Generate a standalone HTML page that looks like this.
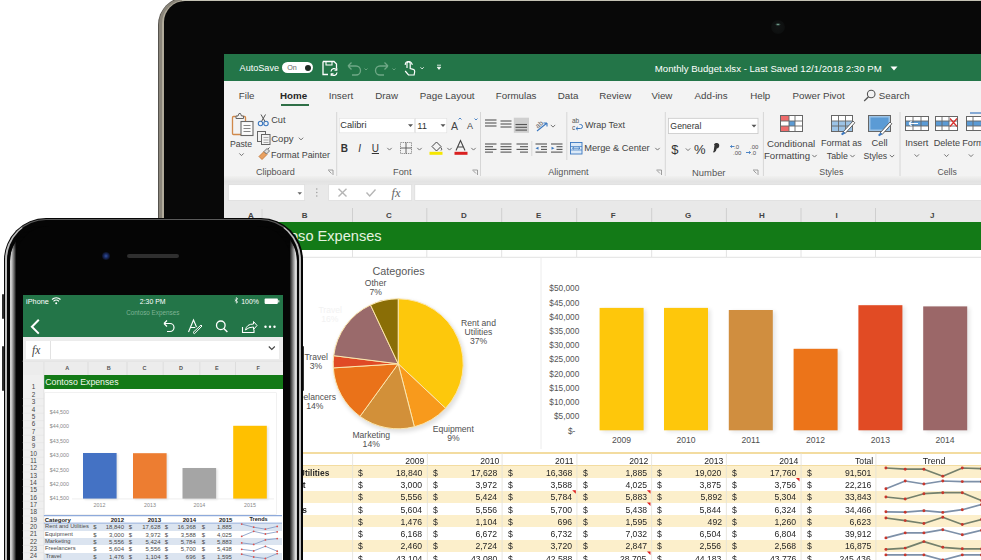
<!DOCTYPE html>
<html><head><meta charset="utf-8"><style>
html,body{margin:0;padding:0;background:#fff;}
#root{position:relative;width:981px;height:560px;overflow:hidden;background:#fff;font-family:"Liberation Sans",sans-serif;}
</style></head><body><div id="root">
<div style="position:absolute;left:157.50px;top:-3.00px;width:1000.00px;height:800.00px;background:#55524c;border-radius:28px;"></div>
<div style="position:absolute;left:159.20px;top:-2.20px;width:1000.00px;height:800.00px;background:#8a857a;border-radius:26px;"></div>
<div style="position:absolute;left:162.00px;top:-0.50px;width:1000.00px;height:800.00px;background:#b0aa9a;border-radius:23.5px;"></div>
<div style="position:absolute;left:182.00px;top:0.00px;width:800.00px;height:1.20px;background:#c4c2b4;"></div>
<div style="position:absolute;left:164.30px;top:1.30px;width:1000.00px;height:800.00px;background:#080808;border-radius:21px;"></div>
<div style="position:absolute;left:770.5px;top:19.8px;width:14px;height:14px;border-radius:50%;background:radial-gradient(ellipse 3px 1.6px at 50% 32%,#8ab8a8 0,rgba(60,90,80,0.6) 60%,rgba(0,0,0,0) 100%),radial-gradient(circle at 50% 50%,#121414 0,#0e1010 60%,#090909 100%);"></div>
<div style="position:absolute;left:224.00px;top:53.50px;width:800.00px;height:560.00px;background:#ffffff;"></div>
<div style="position:absolute;left:224.00px;top:53.50px;width:800.00px;height:27.80px;background:#237548;"></div>
<div style="position:absolute;left:224.00px;top:81.30px;width:800.00px;height:97.70px;background:#f3f3f3;"></div>
<div style="position:absolute;left:224.00px;top:175.50px;width:800.00px;height:9.20px;background:linear-gradient(180deg,#f1f1f0 0,#e3e3e3 60%,#e6e6e6 100%);"></div>
<div style="position:absolute;left:224.00px;top:184.70px;width:800.00px;height:37.50px;background:#e9e9e9;"></div>
<div style="position:absolute;left:224.00px;top:222.20px;width:800.00px;height:27.80px;background:#137a17;"></div>
<div style="position:absolute;left:282.00px;top:62.20px;width:31.00px;height:11.00px;background:#ffffff;border-radius:6px;"></div>
<div style="position:absolute;left:304.5px;top:64.8px;width:6.5px;height:6.5px;border-radius:50%;background:#1f2a24;"></div>
<svg style="position:absolute;left:321px;top:60px" width="18" height="16" viewBox="0 0 18 16">
<path d="M2 1.5h11l2.5 2.5v4M2 1.5v13h5" fill="none" stroke="#fff" stroke-width="1.3"/>
<path d="M5 1.5v3.5h6v-3.5" fill="none" stroke="#fff" stroke-width="1.1"/>
<path d="M10 11.5a3.2 3.2 0 0 1 5.8-1.6M16 12.5a3.2 3.2 0 0 1-5.8 1.6" fill="none" stroke="#fff" stroke-width="1.2"/>
<path d="M15.8 8v2.3h-2.3M10.2 16.2v-2.3h2.3" fill="none" stroke="#fff" stroke-width="1.1"/>
</svg>
<svg style="position:absolute;left:345px;top:60px" width="60" height="16" viewBox="0 0 60 16">
<path d="M3 6h8a4.5 4.5 0 0 1 0 9H7M3 6l3.5-3.5M3 6l3.5 3.5" fill="none" stroke="#6fa886" stroke-width="1.3"/>
<path d="M19.5 8.5l1.5 1.5 1.5-1.5" fill="none" stroke="#6fa886" stroke-width="0.9"/>
<path d="M43 6h-8a4.5 4.5 0 0 0 0 9h4M43 6l-3.5-3.5M43 6l-3.5 3.5" fill="none" stroke="#6fa886" stroke-width="1.3"/>
<path d="M47.5 8.5l1.5 1.5 1.5-1.5" fill="none" stroke="#6fa886" stroke-width="0.9"/>
</svg>
<svg style="position:absolute;left:402px;top:59px" width="45" height="18" viewBox="0 0 45 18">
<path d="M5 9V4.5a1.6 1.6 0 0 1 3.2 0V9.5l3 .8a2 2 0 0 1 1.5 2.2l-.6 3.5H6.5L3.2 12" fill="none" stroke="#fff" stroke-width="1.2"/>
<path d="M3.2 6a3.5 3.5 0 0 1 7 0" fill="none" stroke="#fff" stroke-width="1.1"/>
<path d="M18.5 8.3l1.6 1.6 1.6-1.6" fill="none" stroke="#fff" stroke-width="0.9"/>
<path d="M35 6.2h4M35.3 8.2h3.4l-1.7 2.2z" fill="#fff" stroke="#fff" stroke-width="0.8"/>
</svg>
<svg style="position:absolute;left:889.5px;top:65.5px" width="8" height="5" viewBox="0 0 8 5"><path d="M0.5 0.5h7l-3.5 4z" fill="#fff"/></svg>
<div style="position:absolute;left:281.00px;top:104.00px;width:28.00px;height:2.20px;background:#2f6f47;"></div>
<svg style="position:absolute;left:863px;top:89px" width="14" height="13" viewBox="0 0 14 13">
<circle cx="8.2" cy="5" r="3.8" fill="none" stroke="#555" stroke-width="1.1"/><path d="M5.5 7.8L1.2 12" stroke="#555" stroke-width="1.3"/></svg>
<div style="position:absolute;left:224.00px;top:449.50px;width:800.00px;height:4.00px;background:#ffffff;"></div><div style="position:absolute;left:224.00px;top:466.10px;width:800.00px;height:12.25px;background:#fcefcb;"></div><div style="position:absolute;left:224.00px;top:490.60px;width:800.00px;height:12.25px;background:#fcefcb;"></div><div style="position:absolute;left:224.00px;top:515.10px;width:800.00px;height:12.25px;background:#fcefcb;"></div><div style="position:absolute;left:224.00px;top:539.60px;width:800.00px;height:12.25px;background:#fcefcb;"></div><div style="position:absolute;left:224.00px;top:452.20px;width:800.00px;height:1.60px;background:#f3dca0;"></div><div style="position:absolute;left:224.00px;top:465.00px;width:800.00px;height:1.30px;background:#f3dca0;"></div>
<svg style="position:absolute;left:0;top:0" width="981" height="560" viewBox="0 0 981 560"><defs><filter id="blur2" x="-20%" y="-20%" width="140%" height="140%"><feGaussianBlur stdDeviation="2"/></filter></defs><rect x="232.5" y="116.5" width="13" height="18" rx="1" fill="none" stroke="#d0884a" stroke-width="1.3"/><path d="M236 118.5v-2.5h2l1-2.5h1.5l1 2.5h2v2.5z" fill="#f3f3f3" stroke="#666" stroke-width="1"/><rect x="241" y="121.5" width="12" height="14" fill="#fafafa" stroke="#666" stroke-width="1.1"/><path d="M243.5 125.5h7M243.5 128.5h7M243.5 131.5h7" stroke="#777" stroke-width="0.9"/><path d="M239.3 153.4l2.2 2.2l2.2 -2.2" fill="none" stroke="#666" stroke-width="0.9"/><circle cx="260.5" cy="123.5" r="2.2" fill="none" stroke="#3b78c0" stroke-width="1.1"/><circle cx="266" cy="123.5" r="2.2" fill="none" stroke="#3b78c0" stroke-width="1.1"/><path d="M261.5 121.5L265.5 114.5M265 121.5L261 114.5" stroke="#555" stroke-width="1"/><rect x="257.5" y="131.5" width="8" height="10" fill="#f3f3f3" stroke="#666" stroke-width="1"/><rect x="261.5" y="134.5" width="8.5" height="10" fill="#f3f3f3" stroke="#666" stroke-width="1"/><path d="M263.5 137.5h5M263.5 140h5M263.5 142.5h5" stroke="#888" stroke-width="0.7"/><path d="M298.8 137.7l2.2 2.2l2.2 -2.2" fill="none" stroke="#666" stroke-width="0.9"/><path d="M259 156.5l5-5 3 3-5 5z" fill="#e8a060" stroke="#c4783a" stroke-width="0.9"/><path d="M264 151.5l3-3 2.5 2.5-3 3z" fill="#ddd" stroke="#666" stroke-width="0.9"/><path d="M268 149l1.5-1.5" stroke="#666" stroke-width="1"/><path d="M328.0 170.0h5v5" fill="none" stroke="#888" stroke-width="0.8"/><path d="M328.5 170.5l3 3" stroke="#888" stroke-width="0.8"/><path d="M336.7 112.0V176.0" stroke="#d6d6d6" stroke-width="1"/><rect x="339.3" y="118.3" width="75" height="14.5" fill="#fff" stroke="#e0e0e0" stroke-width="0.6"/><rect x="415.5" y="118.3" width="31.3" height="14.5" fill="#fff" stroke="#e0e0e0" stroke-width="0.6"/><path d="M408 124.3h5l-2.5 2.7z M440.5 124.3h5l-2.5 2.7z" fill="#555"/><path d="M458.5 119.5l1.5-1.5 1.5 1.5" fill="none" stroke="#3b78c0" stroke-width="0.9"/><path d="M474.5 118.5l1.5 1.5 1.5-1.5" fill="none" stroke="#3b78c0" stroke-width="0.9"/><path d="M387.3 147.9l2.2 2.2l2.2 -2.2" fill="none" stroke="#666" stroke-width="0.9"/><rect x="400.5" y="142.5" width="11" height="11" fill="none" stroke="#777" stroke-width="0.9" stroke-dasharray="1.2 1"/><path d="M406 142.5v11M400.5 148h11" stroke="#555" stroke-width="0.9"/><path d="M417.3 147.9l2.2 2.2l2.2 -2.2" fill="none" stroke="#666" stroke-width="0.9"/><path d="M432 146.5l4.5-4.5 4.5 4.5-4.5 4.5z" fill="none" stroke="#444" stroke-width="1"/><path d="M441 147.5q1.5 2 0 3" fill="none" stroke="#444" stroke-width="0.9"/><rect x="429.5" y="151.8" width="13" height="3" fill="#f5e600"/><path d="M447.3 147.9l2.2 2.2l2.2 -2.2" fill="none" stroke="#666" stroke-width="0.9"/><path d="M456 150.5l4.5-10 4.5 10M457.7 147h5.6" fill="none" stroke="#444" stroke-width="1.1"/><rect x="454.5" y="151.8" width="13" height="3" fill="#d92020"/><path d="M471.3 147.9l2.2 2.2l2.2 -2.2" fill="none" stroke="#666" stroke-width="0.9"/><path d="M472.5 170.0h5v5" fill="none" stroke="#888" stroke-width="0.8"/><path d="M473.0 170.5l3 3" stroke="#888" stroke-width="0.8"/><path d="M480.5 112.0V176.0" stroke="#d6d6d6" stroke-width="1"/><path d="M485.0 120.0h11.5" stroke="#555" stroke-width="1.1"/><path d="M485.0 123.0h11.5" stroke="#555" stroke-width="1.1"/><path d="M485.0 126.0h11.5" stroke="#555" stroke-width="1.1"/><path d="M500.5 121.0h11.0" stroke="#555" stroke-width="1.1"/><path d="M500.5 124.0h11.0" stroke="#555" stroke-width="1.1"/><path d="M500.5 127.0h11.0" stroke="#555" stroke-width="1.1"/><rect x="513.8" y="117.7" width="15.2" height="15.1" fill="#cfcfcf"/><path d="M515.5 124.5h11.5" stroke="#555" stroke-width="1.1"/><path d="M515.5 127.3h11.5" stroke="#555" stroke-width="1.1"/><path d="M515.5 130.1h11.5" stroke="#555" stroke-width="1.1"/><text x="535" y="127" font-size="7" font-family="Liberation Sans" fill="#555" transform="rotate(-40 539 124)">ab</text><path d="M537 131l10-8M547 123h-3.5M547 123v3.5" fill="none" stroke="#3b78c0" stroke-width="1.1"/><path d="M550.8 124.9l2.2 2.2l2.2 -2.2" fill="none" stroke="#666" stroke-width="0.9"/><path d="M566.8 112.0V160.0" stroke="#d6d6d6" stroke-width="1"/><text x="572" y="123" font-size="6.5" font-family="Liberation Sans" fill="#555">ab</text><text x="572" y="130" font-size="6.5" font-family="Liberation Sans" fill="#555">c</text><path d="M576 128.5h4.5a2 2 0 0 0 0-4h-1M576 128.5l1.8-1.6M576 128.5l1.8 1.6" fill="none" stroke="#3b78c0" stroke-width="1"/><path d="M485.0 144.0h11.5" stroke="#555" stroke-width="1.1"/><path d="M485.0 146.7h8.0" stroke="#555" stroke-width="1.1"/><path d="M485.0 149.4h11.5" stroke="#555" stroke-width="1.1"/><path d="M485.0 152.1h8.0" stroke="#555" stroke-width="1.1"/><path d="M500.5 144.0h11.0" stroke="#555" stroke-width="1.1"/><path d="M500.5 146.7h11.0" stroke="#555" stroke-width="1.1"/><path d="M500.5 149.4h11.0" stroke="#555" stroke-width="1.1"/><path d="M500.5 152.1h11.0" stroke="#555" stroke-width="1.1"/><path d="M516.5 144.0h11.5" stroke="#555" stroke-width="1.1"/><path d="M520.0 146.7h8.0" stroke="#555" stroke-width="1.1"/><path d="M516.5 149.4h11.5" stroke="#555" stroke-width="1.1"/><path d="M520.0 152.1h8.0" stroke="#555" stroke-width="1.1"/><path d="M531.8 141.0V156.0" stroke="#d6d6d6" stroke-width="1"/><path d="M535.5 144.0h11.5" stroke="#555" stroke-width="1.1"/><path d="M541.0 146.7h6.0" stroke="#555" stroke-width="1.1"/><path d="M541.0 149.4h6.0" stroke="#555" stroke-width="1.1"/><path d="M535.5 152.1h11.5" stroke="#555" stroke-width="1.1"/><path d="M535.5 148.2l3-1.5v3z" fill="#3b78c0"/><path d="M551.0 144.0h11.5" stroke="#555" stroke-width="1.1"/><path d="M556.5 146.7h6.0" stroke="#555" stroke-width="1.1"/><path d="M556.5 149.4h6.0" stroke="#555" stroke-width="1.1"/><path d="M551.0 152.1h11.5" stroke="#555" stroke-width="1.1"/><path d="M554.5 148.2l-3-1.5v3z" fill="#3b78c0"/><rect x="570.5" y="142.5" width="11.5" height="11.5" fill="#dceaf8" stroke="#3b78c0" stroke-width="0.9"/><path d="M570.5 146.5h11.5M570.5 150h11.5" stroke="#3b78c0" stroke-width="0.7"/><path d="M572.5 148.2h7.5M572.5 148.2l1.5-1.2M572.5 148.2l1.5 1.2M580 148.2l-1.5-1.2M580 148.2l-1.5 1.2" stroke="#3b78c0" stroke-width="0.8" fill="none"/><path d="M655.3 147.9l2.2 2.2l2.2 -2.2" fill="none" stroke="#666" stroke-width="0.9"/><path d="M656.5 170.0h5v5" fill="none" stroke="#888" stroke-width="0.8"/><path d="M657.0 170.5l3 3" stroke="#888" stroke-width="0.8"/><path d="M665.3 112.0V176.0" stroke="#d6d6d6" stroke-width="1"/><rect x="668.4" y="118.3" width="89.6" height="15.3" fill="#fff" stroke="#c8c8c8" stroke-width="0.8"/><path d="M751.5 124.8h5l-2.5 2.7z" fill="#555"/><path d="M685.8 148.4l2.2 2.2l2.2 -2.2" fill="none" stroke="#666" stroke-width="0.9"/><path d="M714.5 145a2.1 2.1 0 1 1 1.8 2.8q-.3 3-2.8 4.4" fill="#333" stroke="#333" stroke-width="1.3"/><text x="734" y="148.5" font-size="6" font-family="Liberation Sans" fill="#555">.0</text><text x="733" y="154.5" font-size="6" font-family="Liberation Sans" fill="#555">.00</text><path d="M730.5 146.5h4M730.5 146.5l1.5-1.2M730.5 146.5l1.5 1.2" stroke="#3b78c0" stroke-width="0.9" fill="none"/><text x="750" y="148.5" font-size="6" font-family="Liberation Sans" fill="#555">.00</text><text x="751" y="154.5" font-size="6" font-family="Liberation Sans" fill="#555">.0</text><path d="M746 152.5h4.5M750.5 152.5l-1.5-1.2M750.5 152.5l-1.5 1.2" stroke="#3b78c0" stroke-width="0.9" fill="none"/><path d="M753.0 170.0h5v5" fill="none" stroke="#888" stroke-width="0.8"/><path d="M753.5 170.5l3 3" stroke="#888" stroke-width="0.8"/><path d="M763.4 112.0V176.0" stroke="#d6d6d6" stroke-width="1"/><rect x="780.5" y="115.5" width="22" height="16" fill="#fff" stroke="#666" stroke-width="1"/><rect x="781" y="116" width="8" height="5" fill="#ee6b6b"/><rect x="781" y="126" width="8" height="5" fill="#ee6b6b"/><rect x="789" y="121" width="6" height="5" fill="#5b9bd5"/><path d="M780.5 121h22M780.5 126h22M789 115.5v16M795 115.5v16" stroke="#666" stroke-width="0.9"/><rect x="831.5" y="115.5" width="21" height="16" fill="#fff" stroke="#666" stroke-width="1"/><rect x="832" y="121" width="20" height="10" fill="#9cc3e6"/><path d="M831.5 121h21M831.5 126h21M838.5 115.5v16M845.5 115.5v16" stroke="#666" stroke-width="0.9"/><path d="M843 132l10-11 1.8 1.8-9.5 10.5z" fill="#fff" stroke="#555" stroke-width="0.9"/><path d="M841 134l2.5-2.5 1.8 1.8-3 2z" fill="#3b78c0"/><rect x="868.5" y="115.5" width="22" height="16" fill="#9cc3e6" stroke="#666" stroke-width="1"/><rect x="870.5" y="117.5" width="18" height="12" fill="#5b9bd5"/><path d="M880 133l10-11 1.8 1.8-9.5 10.5z" fill="#fff" stroke="#555" stroke-width="0.9"/><path d="M878 135l2.5-2.5 1.8 1.8-3 2z" fill="#3b78c0"/><path d="M812.3 154.9l2.2 2.2l2.2 -2.2" fill="none" stroke="#666" stroke-width="0.9"/><path d="M850.3 154.9l2.2 2.2l2.2 -2.2" fill="none" stroke="#666" stroke-width="0.9"/><path d="M889.8 154.9l2.2 2.2l2.2 -2.2" fill="none" stroke="#666" stroke-width="0.9"/><path d="M900.0 112.0V176.0" stroke="#d6d6d6" stroke-width="1"/><rect x="905.5" y="116.5" width="23" height="14" fill="#fff" stroke="#666" stroke-width="1"/><rect x="906" y="121" width="22" height="5" fill="#5b9bd5"/><path d="M905.5 121h23M905.5 126h23M913 116.5v14M921 116.5v14" stroke="#666" stroke-width="0.9"/><path d="M909 123.5h9M909 123.5l2.5-2.3M909 123.5l2.5 2.3" stroke="#fff" stroke-width="1.1" fill="none"/><rect x="935.5" y="116.5" width="22" height="14" fill="#fff" stroke="#666" stroke-width="1"/><rect x="936" y="121" width="13" height="5" fill="#5b9bd5"/><path d="M935.5 121h22M935.5 126h22M942 116.5v14M949 116.5v14" stroke="#666" stroke-width="0.9"/><path d="M950 118.5l7 8M957 118.5l-7 8" stroke="#d9302c" stroke-width="1.2"/><rect x="966.5" y="116.5" width="20" height="14" fill="#fff" stroke="#666" stroke-width="1"/><rect x="967" y="121" width="18" height="5" fill="#5b9bd5"/><path d="M966.5 121h20M966.5 126h20M973 116.5v14" stroke="#666" stroke-width="0.9"/><path d="M970 113h14" stroke="#3b78c0" stroke-width="1.2"/><path d="M914.6 154.4l2.2 2.2l2.2 -2.2" fill="none" stroke="#666" stroke-width="0.9"/><path d="M944.3 154.4l2.2 2.2l2.2 -2.2" fill="none" stroke="#666" stroke-width="0.9"/><path d="M968.8 154.4l2.2 2.2l2.2 -2.2" fill="none" stroke="#666" stroke-width="0.9"/><rect x="228.3" y="184.7" width="76.4" height="15.8" fill="#fff" stroke="#dadada" stroke-width="0.7"/><path d="M297.5 192.3h4.5l-2.25 2.4z" fill="#666"/><circle cx="316.8" cy="189" r="0.7" fill="#999"/><circle cx="316.8" cy="192.5" r="0.7" fill="#999"/><circle cx="316.8" cy="196" r="0.7" fill="#999"/><rect x="328.7" y="184.7" width="83" height="15.8" fill="#fff" stroke="#dadada" stroke-width="0.7"/><path d="M338.5 188.8l8 7.6M346.5 188.8l-8 7.6" stroke="#b5b5b5" stroke-width="1.4"/><path d="M366.5 192.5l3.2 3.5 5.8-6.5" fill="none" stroke="#b5b5b5" stroke-width="1.4"/><text x="391.5" y="197" font-size="12.5" font-style="italic" font-family="Liberation Serif" fill="#666">fx</text><rect x="414.8" y="184.7" width="600" height="15.8" fill="#fff" stroke="#dadada" stroke-width="0.7"/><path d="M352.5 208V222" stroke="#cfcfcf" stroke-width="1"/><path d="M426.8 208V222" stroke="#cfcfcf" stroke-width="1"/><path d="M501.7 208V222" stroke="#cfcfcf" stroke-width="1"/><path d="M576.7 208V222" stroke="#cfcfcf" stroke-width="1"/><path d="M651.7 208V222" stroke="#cfcfcf" stroke-width="1"/><path d="M726.4 208V222" stroke="#cfcfcf" stroke-width="1"/><path d="M801.0 208V222" stroke="#cfcfcf" stroke-width="1"/><path d="M875.5 208V222" stroke="#cfcfcf" stroke-width="1"/><path d="M262 209V222" stroke="#d8d8d8" stroke-width="1"/><path d="M224 257.3H990" stroke="#e2e2e2" stroke-width="1"/><path d="M352.5 250V257" stroke="#e2e2e2" stroke-width="1"/><path d="M426.8 250V257" stroke="#e2e2e2" stroke-width="1"/><path d="M501.7 250V257" stroke="#e2e2e2" stroke-width="1"/><path d="M576.7 250V257" stroke="#e2e2e2" stroke-width="1"/><path d="M651.7 250V257" stroke="#e2e2e2" stroke-width="1"/><path d="M726.4 250V257" stroke="#e2e2e2" stroke-width="1"/><path d="M801.0 250V257" stroke="#e2e2e2" stroke-width="1"/><path d="M875.5 250V257" stroke="#e2e2e2" stroke-width="1"/><path d="M541 258V449" stroke="#ececec" stroke-width="1"/><circle cx="399.7" cy="366.3" r="66.0" fill="#000" opacity="0.12" filter="url(#blur2)"/><path d="M398.20 363.80L398.20 298.80A65.0 65.0 0 0 1 445.58 408.30Z" fill="#fdc80c" stroke="#fde7ad" stroke-width="1" stroke-linejoin="round"/><path d="M398.20 363.80L445.58 408.30A65.0 65.0 0 0 1 414.36 426.76Z" fill="#f89a1c" stroke="#fde7ad" stroke-width="1" stroke-linejoin="round"/><path d="M398.20 363.80L414.36 426.76A65.0 65.0 0 0 1 359.99 416.39Z" fill="#d29039" stroke="#fde7ad" stroke-width="1" stroke-linejoin="round"/><path d="M398.20 363.80L359.99 416.39A65.0 65.0 0 0 1 333.33 367.88Z" fill="#ea7219" stroke="#fde7ad" stroke-width="1" stroke-linejoin="round"/><path d="M398.20 363.80L333.33 367.88A65.0 65.0 0 0 1 333.71 355.65Z" fill="#e04a25" stroke="#fde7ad" stroke-width="1" stroke-linejoin="round"/><path d="M398.20 363.80L333.71 355.65A65.0 65.0 0 0 1 370.52 304.99Z" fill="#9a6a6b" stroke="#fde7ad" stroke-width="1" stroke-linejoin="round"/><path d="M398.20 363.80L370.52 304.99A65.0 65.0 0 0 1 398.20 298.80Z" fill="#8a6e06" stroke="#fde7ad" stroke-width="1" stroke-linejoin="round"/><rect x="602.1" y="309.4" width="44" height="122.4" fill="#000" opacity="0.10" filter="url(#blur2)"/><rect x="599.6" y="307.9" width="44" height="122.4" fill="#fec70b"/><rect x="666.5" y="309.4" width="44" height="122.4" fill="#000" opacity="0.10" filter="url(#blur2)"/><rect x="664.0" y="307.9" width="44" height="122.4" fill="#fec70b"/><rect x="731.3" y="311.5" width="44" height="120.3" fill="#000" opacity="0.10" filter="url(#blur2)"/><rect x="728.8" y="310.0" width="44" height="120.3" fill="#d08e3f"/><rect x="796.1" y="350.3" width="44" height="81.5" fill="#000" opacity="0.10" filter="url(#blur2)"/><rect x="793.6" y="348.8" width="44" height="81.5" fill="#ec7419"/><rect x="860.9" y="306.7" width="44" height="125.1" fill="#000" opacity="0.10" filter="url(#blur2)"/><rect x="858.4" y="305.2" width="44" height="125.1" fill="#e14b24"/><rect x="925.7" y="307.9" width="44" height="123.9" fill="#000" opacity="0.10" filter="url(#blur2)"/><rect x="923.2" y="306.4" width="44" height="123.9" fill="#9b6768"/><path d="M352.6 453V560" stroke="#e4e1d8" stroke-width="0.8"/><path d="M427.4 453V560" stroke="#e4e1d8" stroke-width="0.8"/><path d="M502.1 453V560" stroke="#e4e1d8" stroke-width="0.8"/><path d="M576.9 453V560" stroke="#e4e1d8" stroke-width="0.8"/><path d="M651.6 453V560" stroke="#e4e1d8" stroke-width="0.8"/><path d="M726.4 453V560" stroke="#e4e1d8" stroke-width="0.8"/><path d="M801.1 453V560" stroke="#e4e1d8" stroke-width="0.8"/><path d="M875.9 453V560" stroke="#e4e1d8" stroke-width="0.8"/><path d="M572.2 490.2h3.6v3.6z" fill="#e02020"/><path d="M646.9 490.2h3.6v3.6z" fill="#e02020"/><path d="M646.9 502.5h3.6v3.6z" fill="#e02020"/><path d="M646.9 551.5h3.6v3.6z" fill="#e02020"/><path d="M795.9 478.0h3.6v3.6z" fill="#e02020"/><polyline points="885.9,468.0 905.2,469.2 923.9,469.2 942.8,476.2 962.3,468.0 981.5,468.7" fill="none" stroke="#74806c" stroke-width="1.7" stroke-linejoin="round"/><circle cx="885.9" cy="468.0" r="1.45" fill="#c8362c"/><circle cx="905.2" cy="469.2" r="1.45" fill="#c8362c"/><circle cx="923.9" cy="469.2" r="1.45" fill="#c8362c"/><circle cx="942.8" cy="476.2" r="1.45" fill="#c8362c"/><circle cx="962.3" cy="468.0" r="1.45" fill="#c8362c"/><circle cx="981.5" cy="468.7" r="1.45" fill="#c8362c"/><polyline points="885.9,488.8 905.2,481.0 923.9,484.0 942.8,481.0 962.3,481.6 981.5,481.6" fill="none" stroke="#7d90a8" stroke-width="1.7" stroke-linejoin="round"/><circle cx="885.9" cy="488.8" r="1.45" fill="#c8362c"/><circle cx="905.2" cy="481.0" r="1.45" fill="#c8362c"/><circle cx="923.9" cy="484.0" r="1.45" fill="#c8362c"/><circle cx="942.8" cy="481.0" r="1.45" fill="#c8362c"/><circle cx="962.3" cy="481.6" r="1.45" fill="#c8362c"/><circle cx="981.5" cy="481.6" r="1.45" fill="#c8362c"/><polyline points="885.9,497.0 905.2,499.0 923.9,493.7 942.8,492.7 962.3,492.7 981.5,500.5" fill="none" stroke="#74806c" stroke-width="1.7" stroke-linejoin="round"/><circle cx="885.9" cy="497.0" r="1.45" fill="#c8362c"/><circle cx="905.2" cy="499.0" r="1.45" fill="#c8362c"/><circle cx="923.9" cy="493.7" r="1.45" fill="#c8362c"/><circle cx="942.8" cy="492.7" r="1.45" fill="#c8362c"/><circle cx="962.3" cy="492.7" r="1.45" fill="#c8362c"/><circle cx="981.5" cy="500.5" r="1.45" fill="#c8362c"/><polyline points="885.9,511.8 905.2,512.2 923.9,510.7 942.8,512.4 962.3,509.7 981.5,504.6" fill="none" stroke="#7d90a8" stroke-width="1.7" stroke-linejoin="round"/><circle cx="885.9" cy="511.8" r="1.45" fill="#c8362c"/><circle cx="905.2" cy="512.2" r="1.45" fill="#c8362c"/><circle cx="923.9" cy="510.7" r="1.45" fill="#c8362c"/><circle cx="942.8" cy="512.4" r="1.45" fill="#c8362c"/><circle cx="962.3" cy="509.7" r="1.45" fill="#c8362c"/><circle cx="981.5" cy="504.6" r="1.45" fill="#c8362c"/><polyline points="885.9,518.0 905.2,520.6 923.9,523.5 942.8,517.3 962.3,524.5 981.5,519.4" fill="none" stroke="#74806c" stroke-width="1.7" stroke-linejoin="round"/><circle cx="885.9" cy="518.0" r="1.45" fill="#c8362c"/><circle cx="905.2" cy="520.6" r="1.45" fill="#c8362c"/><circle cx="923.9" cy="523.5" r="1.45" fill="#c8362c"/><circle cx="942.8" cy="517.3" r="1.45" fill="#c8362c"/><circle cx="962.3" cy="524.5" r="1.45" fill="#c8362c"/><circle cx="981.5" cy="519.4" r="1.45" fill="#c8362c"/><polyline points="885.9,537.9 905.2,532.9 923.9,532.9 942.8,529.7 962.3,534.8 981.5,530.3" fill="none" stroke="#7d90a8" stroke-width="1.7" stroke-linejoin="round"/><circle cx="885.9" cy="537.9" r="1.45" fill="#c8362c"/><circle cx="905.2" cy="532.9" r="1.45" fill="#c8362c"/><circle cx="923.9" cy="532.9" r="1.45" fill="#c8362c"/><circle cx="942.8" cy="529.7" r="1.45" fill="#c8362c"/><circle cx="962.3" cy="534.8" r="1.45" fill="#c8362c"/><circle cx="981.5" cy="530.3" r="1.45" fill="#c8362c"/><polyline points="885.9,549.4 905.2,548.1 923.9,541.6 942.8,547.3 962.3,548.8 981.5,548.8" fill="none" stroke="#74806c" stroke-width="1.7" stroke-linejoin="round"/><circle cx="885.9" cy="549.4" r="1.45" fill="#c8362c"/><circle cx="905.2" cy="548.1" r="1.45" fill="#c8362c"/><circle cx="923.9" cy="541.6" r="1.45" fill="#c8362c"/><circle cx="942.8" cy="547.3" r="1.45" fill="#c8362c"/><circle cx="962.3" cy="548.8" r="1.45" fill="#c8362c"/><circle cx="981.5" cy="548.8" r="1.45" fill="#c8362c"/><polyline points="885.9,554.9 905.2,554.9 923.9,554.9 942.8,560.0 962.3,554.9 981.5,554.9" fill="none" stroke="#7d90a8" stroke-width="1.7" stroke-linejoin="round"/><circle cx="885.9" cy="554.9" r="1.45" fill="#c8362c"/><circle cx="905.2" cy="554.9" r="1.45" fill="#c8362c"/><circle cx="923.9" cy="554.9" r="1.45" fill="#c8362c"/><circle cx="942.8" cy="560.0" r="1.45" fill="#c8362c"/><circle cx="962.3" cy="554.9" r="1.45" fill="#c8362c"/><circle cx="981.5" cy="554.9" r="1.45" fill="#c8362c"/></svg>
<div style="position:absolute;white-space:nowrap;line-height:9.10px;font-size:9.10px;color:#ffffff;font-weight:normal;font-family:'Liberation Sans', sans-serif;top:63.61px;left:239.60px;"><span style="">AutoSave</span></div>
<div style="position:absolute;white-space:nowrap;line-height:7.20px;font-size:7.20px;color:#666666;font-weight:normal;font-family:'Liberation Sans', sans-serif;top:64.49px;left:287.18px;"><span style="">On</span></div>
<div style="position:absolute;white-space:nowrap;line-height:9.63px;font-size:9.63px;color:#ffffff;font-weight:normal;font-family:'Liberation Sans', sans-serif;top:63.57px;left:654.83px;"><span style="">Monthly Budget.xlsx  -  Last Saved 12/1/2018 2:30 PM</span></div>
<div style="position:absolute;white-space:nowrap;line-height:9.75px;font-size:9.75px;color:#454545;font-weight:normal;font-family:'Liberation Sans', sans-serif;top:90.81px;left:238.82px;"><span style="">File</span></div>
<div style="position:absolute;white-space:nowrap;line-height:9.75px;font-size:9.75px;color:#454545;font-weight:normal;font-family:'Liberation Sans', sans-serif;top:90.81px;left:328.72px;"><span style="">Insert</span></div>
<div style="position:absolute;white-space:nowrap;line-height:9.75px;font-size:9.75px;color:#454545;font-weight:normal;font-family:'Liberation Sans', sans-serif;top:90.81px;left:375.22px;"><span style="">Draw</span></div>
<div style="position:absolute;white-space:nowrap;line-height:9.75px;font-size:9.75px;color:#454545;font-weight:normal;font-family:'Liberation Sans', sans-serif;top:90.81px;left:419.82px;"><span style="">Page Layout</span></div>
<div style="position:absolute;white-space:nowrap;line-height:9.75px;font-size:9.75px;color:#454545;font-weight:normal;font-family:'Liberation Sans', sans-serif;top:90.81px;left:495.82px;"><span style="">Formulas</span></div>
<div style="position:absolute;white-space:nowrap;line-height:9.75px;font-size:9.75px;color:#454545;font-weight:normal;font-family:'Liberation Sans', sans-serif;top:90.81px;left:557.82px;"><span style="">Data</span></div>
<div style="position:absolute;white-space:nowrap;line-height:9.75px;font-size:9.75px;color:#454545;font-weight:normal;font-family:'Liberation Sans', sans-serif;top:90.81px;left:599.22px;"><span style="">Review</span></div>
<div style="position:absolute;white-space:nowrap;line-height:9.75px;font-size:9.75px;color:#454545;font-weight:normal;font-family:'Liberation Sans', sans-serif;top:90.81px;left:651.40px;"><span style="">View</span></div>
<div style="position:absolute;white-space:nowrap;line-height:9.75px;font-size:9.75px;color:#454545;font-weight:normal;font-family:'Liberation Sans', sans-serif;top:90.81px;left:694.60px;"><span style="">Add-ins</span></div>
<div style="position:absolute;white-space:nowrap;line-height:9.75px;font-size:9.75px;color:#454545;font-weight:normal;font-family:'Liberation Sans', sans-serif;top:90.81px;left:750.22px;"><span style="">Help</span></div>
<div style="position:absolute;white-space:nowrap;line-height:9.75px;font-size:9.75px;color:#454545;font-weight:normal;font-family:'Liberation Sans', sans-serif;top:90.81px;left:792.62px;"><span style="">Power Pivot</span></div>
<div style="position:absolute;white-space:nowrap;line-height:9.75px;font-size:9.75px;color:#454545;font-weight:normal;font-family:'Liberation Sans', sans-serif;top:90.81px;left:878.86px;"><span style="">Search</span></div>
<div style="position:absolute;white-space:nowrap;line-height:9.77px;font-size:9.77px;color:#262626;font-weight:bold;font-family:'Liberation Sans', sans-serif;top:90.81px;left:279.96px;"><span style="">Home</span></div>
<div style="position:absolute;white-space:nowrap;line-height:8.70px;font-size:8.70px;color:#444444;font-weight:normal;font-family:'Liberation Sans', sans-serif;top:140.20px;left:229.90px;"><span style="">Paste</span></div>
<div style="position:absolute;white-space:nowrap;line-height:9.18px;font-size:9.18px;color:#444444;font-weight:normal;font-family:'Liberation Sans', sans-serif;top:115.58px;left:271.24px;"><span style="">Cut</span></div>
<div style="position:absolute;white-space:nowrap;line-height:9.54px;font-size:9.54px;color:#444444;font-weight:normal;font-family:'Liberation Sans', sans-serif;top:134.01px;left:271.22px;"><span style="">Copy</span></div>
<div style="position:absolute;white-space:nowrap;line-height:8.94px;font-size:8.94px;color:#444444;font-weight:normal;font-family:'Liberation Sans', sans-serif;top:150.89px;left:270.98px;"><span style="">Format Painter</span></div>
<div style="position:absolute;white-space:nowrap;line-height:9.09px;font-size:9.09px;color:#555;font-weight:normal;font-family:'Liberation Sans', sans-serif;top:168.02px;left:255.95px;"><span style="">Clipboard</span></div>
<div style="position:absolute;white-space:nowrap;line-height:9.28px;font-size:9.28px;color:#333;font-weight:normal;font-family:'Liberation Sans', sans-serif;top:121.33px;left:340.24px;"><span style="">Calibri</span></div>
<div style="position:absolute;white-space:nowrap;line-height:9.45px;font-size:9.45px;color:#333;font-weight:normal;font-family:'Liberation Sans', sans-serif;top:121.25px;left:417.29px;"><span style="">11</span></div>
<div style="position:absolute;white-space:nowrap;line-height:9.23px;font-size:9.23px;color:#555;font-weight:normal;font-family:'Liberation Sans', sans-serif;top:167.95px;left:393.06px;"><span style="">Font</span></div>
<div style="position:absolute;white-space:nowrap;line-height:9.00px;font-size:9.00px;color:#444444;font-weight:normal;font-family:'Liberation Sans', sans-serif;top:121.46px;left:584.90px;"><span style="">Wrap Text</span></div>
<div style="position:absolute;white-space:nowrap;line-height:9.27px;font-size:9.27px;color:#444444;font-weight:normal;font-family:'Liberation Sans', sans-serif;top:144.14px;left:584.26px;"><span style="">Merge &amp; Center</span></div>
<div style="position:absolute;white-space:nowrap;line-height:9.07px;font-size:9.07px;color:#555;font-weight:normal;font-family:'Liberation Sans', sans-serif;top:168.03px;left:548.30px;"><span style="">Alignment</span></div>
<div style="position:absolute;white-space:nowrap;line-height:8.71px;font-size:8.71px;color:#333;font-weight:normal;font-family:'Liberation Sans', sans-serif;top:122.39px;left:670.36px;"><span style="">General</span></div>
<div style="position:absolute;white-space:nowrap;line-height:9.41px;font-size:9.41px;color:#555;font-weight:normal;font-family:'Liberation Sans', sans-serif;top:167.87px;left:692.05px;"><span style="">Number</span></div>
<div style="position:absolute;white-space:nowrap;line-height:9.66px;font-size:9.66px;color:#444444;font-weight:normal;font-family:'Liberation Sans', sans-serif;top:139.16px;left:766.92px;"><span style="">Conditional</span></div>
<div style="position:absolute;white-space:nowrap;line-height:9.66px;font-size:9.66px;color:#444444;font-weight:normal;font-family:'Liberation Sans', sans-serif;top:151.16px;left:763.93px;"><span style="">Formatting</span></div>
<div style="position:absolute;white-space:nowrap;line-height:9.07px;font-size:9.07px;color:#444444;font-weight:normal;font-family:'Liberation Sans', sans-serif;top:139.43px;left:820.97px;"><span style="">Format as</span></div>
<div style="position:absolute;white-space:nowrap;line-height:8.80px;font-size:8.80px;color:#444444;font-weight:normal;font-family:'Liberation Sans', sans-serif;top:151.55px;left:826.82px;"><span style="">Table</span></div>
<div style="position:absolute;white-space:nowrap;line-height:9.31px;font-size:9.31px;color:#444444;font-weight:normal;font-family:'Liberation Sans', sans-serif;top:139.32px;left:871.53px;"><span style="">Cell</span></div>
<div style="position:absolute;white-space:nowrap;line-height:8.65px;font-size:8.65px;color:#444444;font-weight:normal;font-family:'Liberation Sans', sans-serif;top:151.62px;left:863.61px;"><span style="">Styles</span></div>
<div style="position:absolute;white-space:nowrap;line-height:8.82px;font-size:8.82px;color:#555;font-weight:normal;font-family:'Liberation Sans', sans-serif;top:168.14px;left:819.30px;"><span style="">Styles</span></div>
<div style="position:absolute;white-space:nowrap;line-height:9.30px;font-size:9.30px;color:#444444;font-weight:normal;font-family:'Liberation Sans', sans-serif;top:139.32px;left:905.16px;"><span style="">Insert</span></div>
<div style="position:absolute;white-space:nowrap;line-height:9.14px;font-size:9.14px;color:#444444;font-weight:normal;font-family:'Liberation Sans', sans-serif;top:139.40px;left:933.67px;"><span style="">Delete</span></div>
<div style="position:absolute;white-space:nowrap;line-height:9.20px;font-size:9.20px;color:#444444;font-weight:normal;font-family:'Liberation Sans', sans-serif;top:139.37px;left:962.26px;"><span style="">Format</span></div>
<div style="position:absolute;white-space:nowrap;line-height:8.65px;font-size:8.65px;color:#555;font-weight:normal;font-family:'Liberation Sans', sans-serif;top:168.22px;left:937.57px;"><span style="">Cells</span></div>
<div style="position:absolute;white-space:nowrap;line-height:10.00px;font-size:10.00px;color:#333;font-weight:bold;font-family:'Liberation Sans', sans-serif;top:143.80px;left:340.85px;"><span style="">B</span></div>
<div style="position:absolute;white-space:nowrap;line-height:10.00px;font-size:10.00px;color:#333;font-weight:normal;font-family:'Liberation Sans', sans-serif;top:143.80px;left:358.15px;"><span style="font-style:italic">I</span></div>
<div style="position:absolute;white-space:nowrap;line-height:10.00px;font-size:10.00px;color:#333;font-weight:normal;font-family:'Liberation Sans', sans-serif;top:143.80px;left:371.75px;"><span style="text-decoration:underline">U</span></div>
<div style="position:absolute;white-space:nowrap;line-height:13.00px;font-size:13.00px;color:#333;font-weight:normal;font-family:'Liberation Sans', sans-serif;top:142.62px;left:671.37px;"><span style="">$</span></div>
<div style="position:absolute;white-space:nowrap;line-height:13.00px;font-size:13.00px;color:#333;font-weight:normal;font-family:'Liberation Sans', sans-serif;top:142.62px;left:694.04px;"><span style="">%</span></div>
<div style="position:absolute;white-space:nowrap;line-height:10.50px;font-size:10.50px;color:#444;font-weight:normal;font-family:'Liberation Sans', sans-serif;top:120.77px;left:451.00px;"><span style="">A</span></div>
<div style="position:absolute;white-space:nowrap;line-height:9.00px;font-size:9.00px;color:#444;font-weight:normal;font-family:'Liberation Sans', sans-serif;top:122.26px;left:467.00px;"><span style="">A</span></div>
<div style="position:absolute;white-space:nowrap;line-height:8.00px;font-size:8.00px;color:#444;font-weight:bold;font-family:'Liberation Sans', sans-serif;top:212.12px;left:141.01px;width:220.00px;text-align:center;"><span style="">A</span></div>
<div style="position:absolute;white-space:nowrap;line-height:8.00px;font-size:8.00px;color:#444;font-weight:bold;font-family:'Liberation Sans', sans-serif;top:212.12px;left:194.71px;width:220.00px;text-align:center;"><span style="">B</span></div>
<div style="position:absolute;white-space:nowrap;line-height:8.00px;font-size:8.00px;color:#444;font-weight:bold;font-family:'Liberation Sans', sans-serif;top:212.12px;left:278.85px;width:220.00px;text-align:center;"><span style="">C</span></div>
<div style="position:absolute;white-space:nowrap;line-height:8.00px;font-size:8.00px;color:#444;font-weight:bold;font-family:'Liberation Sans', sans-serif;top:212.12px;left:353.89px;width:220.00px;text-align:center;"><span style="">D</span></div>
<div style="position:absolute;white-space:nowrap;line-height:8.00px;font-size:8.00px;color:#444;font-weight:bold;font-family:'Liberation Sans', sans-serif;top:212.12px;left:428.69px;width:220.00px;text-align:center;"><span style="">E</span></div>
<div style="position:absolute;white-space:nowrap;line-height:8.00px;font-size:8.00px;color:#444;font-weight:bold;font-family:'Liberation Sans', sans-serif;top:212.12px;left:503.19px;width:220.00px;text-align:center;"><span style="">F</span></div>
<div style="position:absolute;white-space:nowrap;line-height:8.00px;font-size:8.00px;color:#444;font-weight:bold;font-family:'Liberation Sans', sans-serif;top:212.12px;left:578.08px;width:220.00px;text-align:center;"><span style="">G</span></div>
<div style="position:absolute;white-space:nowrap;line-height:8.00px;font-size:8.00px;color:#444;font-weight:bold;font-family:'Liberation Sans', sans-serif;top:212.12px;left:652.01px;width:220.00px;text-align:center;"><span style="">H</span></div>
<div style="position:absolute;white-space:nowrap;line-height:8.00px;font-size:8.00px;color:#444;font-weight:bold;font-family:'Liberation Sans', sans-serif;top:212.12px;left:726.70px;width:220.00px;text-align:center;"><span style="">I</span></div>
<div style="position:absolute;white-space:nowrap;line-height:8.00px;font-size:8.00px;color:#444;font-weight:bold;font-family:'Liberation Sans', sans-serif;top:212.12px;left:822.21px;width:220.00px;text-align:center;"><span style="">J</span></div>
<div style="position:absolute;white-space:nowrap;line-height:14.60px;font-size:14.60px;color:#e6f3e0;font-weight:normal;font-family:'Liberation Sans', sans-serif;top:229.08px;right:599.33px;"><span style="">Contoso Expenses</span></div>
<div style="position:absolute;white-space:nowrap;line-height:10.81px;font-size:10.81px;color:#595959;font-weight:normal;font-family:'Liberation Sans', sans-serif;top:265.83px;left:372.46px;"><span style="">Categories</span></div>
<div style="position:absolute;white-space:nowrap;line-height:8.60px;font-size:8.60px;color:#505050;font-weight:normal;font-family:'Liberation Sans', sans-serif;top:279.34px;left:245.56px;width:260.00px;text-align:center;"><span style="">Other</span></div>
<div style="position:absolute;white-space:nowrap;line-height:8.60px;font-size:8.60px;color:#505050;font-weight:normal;font-family:'Liberation Sans', sans-serif;top:288.24px;left:245.63px;width:260.00px;text-align:center;"><span style="">7%</span></div>
<div style="position:absolute;white-space:nowrap;line-height:8.60px;font-size:8.60px;color:#505050;font-weight:normal;font-family:'Liberation Sans', sans-serif;top:318.64px;left:348.51px;width:260.00px;text-align:center;"><span style="">Rent and</span></div>
<div style="position:absolute;white-space:nowrap;line-height:8.60px;font-size:8.60px;color:#505050;font-weight:normal;font-family:'Liberation Sans', sans-serif;top:328.14px;left:348.42px;width:260.00px;text-align:center;"><span style="">Utilities</span></div>
<div style="position:absolute;white-space:nowrap;line-height:8.60px;font-size:8.60px;color:#505050;font-weight:normal;font-family:'Liberation Sans', sans-serif;top:337.24px;left:348.59px;width:260.00px;text-align:center;"><span style="">37%</span></div>
<div style="position:absolute;white-space:nowrap;line-height:8.60px;font-size:8.60px;color:#505050;font-weight:normal;font-family:'Liberation Sans', sans-serif;top:353.14px;left:186.18px;width:260.00px;text-align:center;"><span style="">Travel</span></div>
<div style="position:absolute;white-space:nowrap;line-height:8.60px;font-size:8.60px;color:#505050;font-weight:normal;font-family:'Liberation Sans', sans-serif;top:362.24px;left:185.99px;width:260.00px;text-align:center;"><span style="">3%</span></div>
<div style="position:absolute;white-space:nowrap;line-height:8.60px;font-size:8.60px;color:#505050;font-weight:normal;font-family:'Liberation Sans', sans-serif;top:393.14px;right:645.03px;"><span style="">Freelancers</span></div>
<div style="position:absolute;white-space:nowrap;line-height:8.60px;font-size:8.60px;color:#505050;font-weight:normal;font-family:'Liberation Sans', sans-serif;top:402.24px;left:184.82px;width:260.00px;text-align:center;"><span style="">14%</span></div>
<div style="position:absolute;white-space:nowrap;line-height:8.60px;font-size:8.60px;color:#505050;font-weight:normal;font-family:'Liberation Sans', sans-serif;top:431.14px;left:241.31px;width:260.00px;text-align:center;"><span style="">Marketing</span></div>
<div style="position:absolute;white-space:nowrap;line-height:8.60px;font-size:8.60px;color:#505050;font-weight:normal;font-family:'Liberation Sans', sans-serif;top:440.24px;left:241.22px;width:260.00px;text-align:center;"><span style="">14%</span></div>
<div style="position:absolute;white-space:nowrap;line-height:8.60px;font-size:8.60px;color:#505050;font-weight:normal;font-family:'Liberation Sans', sans-serif;top:424.74px;left:323.26px;width:260.00px;text-align:center;"><span style="">Equipment</span></div>
<div style="position:absolute;white-space:nowrap;line-height:8.60px;font-size:8.60px;color:#505050;font-weight:normal;font-family:'Liberation Sans', sans-serif;top:433.74px;left:323.55px;width:260.00px;text-align:center;"><span style="">9%</span></div>
<div style="position:absolute;white-space:nowrap;line-height:8.60px;font-size:8.60px;color:#f2f2f2;font-weight:normal;font-family:'Liberation Sans', sans-serif;top:306.04px;left:200.18px;width:260.00px;text-align:center;"><span style="">Travel</span></div>
<div style="position:absolute;white-space:nowrap;line-height:8.60px;font-size:8.60px;color:#f2f2f2;font-weight:normal;font-family:'Liberation Sans', sans-serif;top:315.04px;left:199.82px;width:260.00px;text-align:center;"><span style="">16%</span></div>
<div style="position:absolute;white-space:nowrap;line-height:8.30px;font-size:8.30px;color:#555555;font-weight:normal;font-family:'Liberation Sans', sans-serif;top:284.38px;right:401.70px;"><span style="">$50,000</span></div>
<div style="position:absolute;white-space:nowrap;line-height:8.30px;font-size:8.30px;color:#555555;font-weight:normal;font-family:'Liberation Sans', sans-serif;top:298.60px;right:401.70px;"><span style="">$45,000</span></div>
<div style="position:absolute;white-space:nowrap;line-height:8.30px;font-size:8.30px;color:#555555;font-weight:normal;font-family:'Liberation Sans', sans-serif;top:312.82px;right:401.70px;"><span style="">$40,000</span></div>
<div style="position:absolute;white-space:nowrap;line-height:8.30px;font-size:8.30px;color:#555555;font-weight:normal;font-family:'Liberation Sans', sans-serif;top:327.04px;right:401.70px;"><span style="">$35,000</span></div>
<div style="position:absolute;white-space:nowrap;line-height:8.30px;font-size:8.30px;color:#555555;font-weight:normal;font-family:'Liberation Sans', sans-serif;top:341.26px;right:401.70px;"><span style="">$30,000</span></div>
<div style="position:absolute;white-space:nowrap;line-height:8.30px;font-size:8.30px;color:#555555;font-weight:normal;font-family:'Liberation Sans', sans-serif;top:355.48px;right:401.70px;"><span style="">$25,000</span></div>
<div style="position:absolute;white-space:nowrap;line-height:8.30px;font-size:8.30px;color:#555555;font-weight:normal;font-family:'Liberation Sans', sans-serif;top:369.70px;right:401.70px;"><span style="">$20,000</span></div>
<div style="position:absolute;white-space:nowrap;line-height:8.30px;font-size:8.30px;color:#555555;font-weight:normal;font-family:'Liberation Sans', sans-serif;top:383.92px;right:401.70px;"><span style="">$15,000</span></div>
<div style="position:absolute;white-space:nowrap;line-height:8.30px;font-size:8.30px;color:#555555;font-weight:normal;font-family:'Liberation Sans', sans-serif;top:398.14px;right:401.70px;"><span style="">$10,000</span></div>
<div style="position:absolute;white-space:nowrap;line-height:8.30px;font-size:8.30px;color:#555555;font-weight:normal;font-family:'Liberation Sans', sans-serif;top:412.36px;right:401.70px;"><span style="">$5,000</span></div>
<div style="position:absolute;white-space:nowrap;line-height:8.30px;font-size:8.30px;color:#555555;font-weight:normal;font-family:'Liberation Sans', sans-serif;top:426.58px;right:405.63px;"><span style="">$-</span></div>
<div style="position:absolute;white-space:nowrap;line-height:8.60px;font-size:8.60px;color:#505050;font-weight:normal;font-family:'Liberation Sans', sans-serif;top:436.24px;left:501.58px;width:240.00px;text-align:center;"><span style="">2009</span></div>
<div style="position:absolute;white-space:nowrap;line-height:8.60px;font-size:8.60px;color:#505050;font-weight:normal;font-family:'Liberation Sans', sans-serif;top:436.24px;left:565.94px;width:240.00px;text-align:center;"><span style="">2010</span></div>
<div style="position:absolute;white-space:nowrap;line-height:8.60px;font-size:8.60px;color:#505050;font-weight:normal;font-family:'Liberation Sans', sans-serif;top:436.24px;left:630.78px;width:240.00px;text-align:center;"><span style="">2011</span></div>
<div style="position:absolute;white-space:nowrap;line-height:8.60px;font-size:8.60px;color:#505050;font-weight:normal;font-family:'Liberation Sans', sans-serif;top:436.24px;left:695.58px;width:240.00px;text-align:center;"><span style="">2012</span></div>
<div style="position:absolute;white-space:nowrap;line-height:8.60px;font-size:8.60px;color:#505050;font-weight:normal;font-family:'Liberation Sans', sans-serif;top:436.24px;left:760.36px;width:240.00px;text-align:center;"><span style="">2013</span></div>
<div style="position:absolute;white-space:nowrap;line-height:8.60px;font-size:8.60px;color:#505050;font-weight:normal;font-family:'Liberation Sans', sans-serif;top:436.24px;left:825.09px;width:240.00px;text-align:center;"><span style="">2014</span></div>
<div style="position:absolute;white-space:nowrap;line-height:9.60px;font-size:9.60px;color:#262626;font-weight:normal;font-family:'Liberation Sans', sans-serif;top:456.18px;right:556.56px;transform:scaleX(0.900);transform-origin:right center;"><span style="">2009</span></div>
<div style="position:absolute;white-space:nowrap;line-height:9.60px;font-size:9.60px;color:#262626;font-weight:normal;font-family:'Liberation Sans', sans-serif;top:456.18px;right:481.90px;transform:scaleX(0.900);transform-origin:right center;"><span style="">2010</span></div>
<div style="position:absolute;white-space:nowrap;line-height:9.60px;font-size:9.60px;color:#262626;font-weight:normal;font-family:'Liberation Sans', sans-serif;top:456.18px;right:407.05px;transform:scaleX(0.900);transform-origin:right center;"><span style="">2011</span></div>
<div style="position:absolute;white-space:nowrap;line-height:9.60px;font-size:9.60px;color:#262626;font-weight:normal;font-family:'Liberation Sans', sans-serif;top:456.18px;right:332.31px;transform:scaleX(0.900);transform-origin:right center;"><span style="">2012</span></div>
<div style="position:absolute;white-space:nowrap;line-height:9.60px;font-size:9.60px;color:#262626;font-weight:normal;font-family:'Liberation Sans', sans-serif;top:456.18px;right:257.61px;transform:scaleX(0.900);transform-origin:right center;"><span style="">2013</span></div>
<div style="position:absolute;white-space:nowrap;line-height:9.60px;font-size:9.60px;color:#262626;font-weight:normal;font-family:'Liberation Sans', sans-serif;top:456.18px;right:182.99px;transform:scaleX(0.900);transform-origin:right center;"><span style="">2014</span></div>
<div style="position:absolute;white-space:nowrap;line-height:9.60px;font-size:9.60px;color:#262626;font-weight:normal;font-family:'Liberation Sans', sans-serif;top:456.18px;right:107.92px;transform:scaleX(0.900);transform-origin:right center;"><span style="">Total</span></div>
<div style="position:absolute;white-space:nowrap;line-height:9.60px;font-size:9.60px;color:#262626;font-weight:normal;font-family:'Liberation Sans', sans-serif;top:456.18px;left:800.18px;width:268.00px;text-align:center;transform:scaleX(0.920);transform-origin:center center;"><span style="">Trend</span></div>
<div style="position:absolute;white-space:nowrap;line-height:9.60px;font-size:9.60px;color:#2a2a2a;font-weight:bold;font-family:'Liberation Sans', sans-serif;top:467.98px;right:651.34px;transform:scaleX(0.880);transform-origin:right center;"><span style="">Rent and Utilities</span></div>
<div style="position:absolute;white-space:nowrap;line-height:9.60px;font-size:9.60px;color:#262626;font-weight:normal;font-family:'Liberation Sans', sans-serif;top:467.98px;left:358.31px;transform:scaleX(0.900);transform-origin:left center;"><span style="">$</span></div>
<div style="position:absolute;white-space:nowrap;line-height:9.60px;font-size:9.60px;color:#262626;font-weight:normal;font-family:'Liberation Sans', sans-serif;top:467.98px;right:558.55px;transform:scaleX(0.900);transform-origin:right center;"><span style="">18,840</span></div>
<div style="position:absolute;white-space:nowrap;line-height:9.60px;font-size:9.60px;color:#262626;font-weight:normal;font-family:'Liberation Sans', sans-serif;top:467.98px;left:433.06px;transform:scaleX(0.900);transform-origin:left center;"><span style="">$</span></div>
<div style="position:absolute;white-space:nowrap;line-height:9.60px;font-size:9.60px;color:#262626;font-weight:normal;font-family:'Liberation Sans', sans-serif;top:467.98px;right:483.76px;transform:scaleX(0.900);transform-origin:right center;"><span style="">17,628</span></div>
<div style="position:absolute;white-space:nowrap;line-height:9.60px;font-size:9.60px;color:#262626;font-weight:normal;font-family:'Liberation Sans', sans-serif;top:467.98px;left:507.81px;transform:scaleX(0.900);transform-origin:left center;"><span style="">$</span></div>
<div style="position:absolute;white-space:nowrap;line-height:9.60px;font-size:9.60px;color:#262626;font-weight:normal;font-family:'Liberation Sans', sans-serif;top:467.98px;right:409.01px;transform:scaleX(0.900);transform-origin:right center;"><span style="">16,368</span></div>
<div style="position:absolute;white-space:nowrap;line-height:9.60px;font-size:9.60px;color:#262626;font-weight:normal;font-family:'Liberation Sans', sans-serif;top:467.98px;left:582.56px;transform:scaleX(0.900);transform-origin:left center;"><span style="">$</span></div>
<div style="position:absolute;white-space:nowrap;line-height:9.60px;font-size:9.60px;color:#262626;font-weight:normal;font-family:'Liberation Sans', sans-serif;top:467.98px;right:334.25px;transform:scaleX(0.900);transform-origin:right center;"><span style="">1,885</span></div>
<div style="position:absolute;white-space:nowrap;line-height:9.60px;font-size:9.60px;color:#262626;font-weight:normal;font-family:'Liberation Sans', sans-serif;top:467.98px;left:657.31px;transform:scaleX(0.900);transform-origin:left center;"><span style="">$</span></div>
<div style="position:absolute;white-space:nowrap;line-height:9.60px;font-size:9.60px;color:#262626;font-weight:normal;font-family:'Liberation Sans', sans-serif;top:467.98px;right:259.55px;transform:scaleX(0.900);transform-origin:right center;"><span style="">19,020</span></div>
<div style="position:absolute;white-space:nowrap;line-height:9.60px;font-size:9.60px;color:#262626;font-weight:normal;font-family:'Liberation Sans', sans-serif;top:467.98px;left:732.06px;transform:scaleX(0.900);transform-origin:left center;"><span style="">$</span></div>
<div style="position:absolute;white-space:nowrap;line-height:9.60px;font-size:9.60px;color:#262626;font-weight:normal;font-family:'Liberation Sans', sans-serif;top:467.98px;right:184.80px;transform:scaleX(0.900);transform-origin:right center;"><span style="">17,760</span></div>
<div style="position:absolute;white-space:nowrap;line-height:9.60px;font-size:9.60px;color:#262626;font-weight:normal;font-family:'Liberation Sans', sans-serif;top:467.98px;left:806.81px;transform:scaleX(0.900);transform-origin:left center;"><span style="">$</span></div>
<div style="position:absolute;white-space:nowrap;line-height:9.60px;font-size:9.60px;color:#262626;font-weight:normal;font-family:'Liberation Sans', sans-serif;top:467.98px;right:109.97px;transform:scaleX(0.900);transform-origin:right center;"><span style="">91,501</span></div>
<div style="position:absolute;white-space:nowrap;line-height:9.60px;font-size:9.60px;color:#2a2a2a;font-weight:bold;font-family:'Liberation Sans', sans-serif;top:480.23px;right:675.75px;transform:scaleX(0.880);transform-origin:right center;"><span style="">Equipment</span></div>
<div style="position:absolute;white-space:nowrap;line-height:9.60px;font-size:9.60px;color:#262626;font-weight:normal;font-family:'Liberation Sans', sans-serif;top:480.23px;left:358.31px;transform:scaleX(0.900);transform-origin:left center;"><span style="">$</span></div>
<div style="position:absolute;white-space:nowrap;line-height:9.60px;font-size:9.60px;color:#262626;font-weight:normal;font-family:'Liberation Sans', sans-serif;top:480.23px;right:558.54px;transform:scaleX(0.900);transform-origin:right center;"><span style="">3,000</span></div>
<div style="position:absolute;white-space:nowrap;line-height:9.60px;font-size:9.60px;color:#262626;font-weight:normal;font-family:'Liberation Sans', sans-serif;top:480.23px;left:433.06px;transform:scaleX(0.900);transform-origin:left center;"><span style="">$</span></div>
<div style="position:absolute;white-space:nowrap;line-height:9.60px;font-size:9.60px;color:#262626;font-weight:normal;font-family:'Liberation Sans', sans-serif;top:480.23px;right:483.71px;transform:scaleX(0.900);transform-origin:right center;"><span style="">3,972</span></div>
<div style="position:absolute;white-space:nowrap;line-height:9.60px;font-size:9.60px;color:#262626;font-weight:normal;font-family:'Liberation Sans', sans-serif;top:480.23px;left:507.81px;transform:scaleX(0.900);transform-origin:left center;"><span style="">$</span></div>
<div style="position:absolute;white-space:nowrap;line-height:9.60px;font-size:9.60px;color:#262626;font-weight:normal;font-family:'Liberation Sans', sans-serif;top:480.23px;right:409.00px;transform:scaleX(0.900);transform-origin:right center;"><span style="">3,588</span></div>
<div style="position:absolute;white-space:nowrap;line-height:9.60px;font-size:9.60px;color:#262626;font-weight:normal;font-family:'Liberation Sans', sans-serif;top:480.23px;left:582.56px;transform:scaleX(0.900);transform-origin:left center;"><span style="">$</span></div>
<div style="position:absolute;white-space:nowrap;line-height:9.60px;font-size:9.60px;color:#262626;font-weight:normal;font-family:'Liberation Sans', sans-serif;top:480.23px;right:334.25px;transform:scaleX(0.900);transform-origin:right center;"><span style="">4,025</span></div>
<div style="position:absolute;white-space:nowrap;line-height:9.60px;font-size:9.60px;color:#262626;font-weight:normal;font-family:'Liberation Sans', sans-serif;top:480.23px;left:657.31px;transform:scaleX(0.900);transform-origin:left center;"><span style="">$</span></div>
<div style="position:absolute;white-space:nowrap;line-height:9.60px;font-size:9.60px;color:#262626;font-weight:normal;font-family:'Liberation Sans', sans-serif;top:480.23px;right:259.50px;transform:scaleX(0.900);transform-origin:right center;"><span style="">3,875</span></div>
<div style="position:absolute;white-space:nowrap;line-height:9.60px;font-size:9.60px;color:#262626;font-weight:normal;font-family:'Liberation Sans', sans-serif;top:480.23px;left:732.06px;transform:scaleX(0.900);transform-origin:left center;"><span style="">$</span></div>
<div style="position:absolute;white-space:nowrap;line-height:9.60px;font-size:9.60px;color:#262626;font-weight:normal;font-family:'Liberation Sans', sans-serif;top:480.23px;right:184.75px;transform:scaleX(0.900);transform-origin:right center;"><span style="">3,756</span></div>
<div style="position:absolute;white-space:nowrap;line-height:9.60px;font-size:9.60px;color:#262626;font-weight:normal;font-family:'Liberation Sans', sans-serif;top:480.23px;left:806.81px;transform:scaleX(0.900);transform-origin:left center;"><span style="">$</span></div>
<div style="position:absolute;white-space:nowrap;line-height:9.60px;font-size:9.60px;color:#262626;font-weight:normal;font-family:'Liberation Sans', sans-serif;top:480.23px;right:110.01px;transform:scaleX(0.900);transform-origin:right center;"><span style="">22,216</span></div>
<div style="position:absolute;white-space:nowrap;line-height:9.60px;font-size:9.60px;color:#2a2a2a;font-weight:bold;font-family:'Liberation Sans', sans-serif;top:492.48px;right:682.46px;transform:scaleX(0.880);transform-origin:right center;"><span style="">Marketing</span></div>
<div style="position:absolute;white-space:nowrap;line-height:9.60px;font-size:9.60px;color:#262626;font-weight:normal;font-family:'Liberation Sans', sans-serif;top:492.48px;left:358.31px;transform:scaleX(0.900);transform-origin:left center;"><span style="">$</span></div>
<div style="position:absolute;white-space:nowrap;line-height:9.60px;font-size:9.60px;color:#262626;font-weight:normal;font-family:'Liberation Sans', sans-serif;top:492.48px;right:558.50px;transform:scaleX(0.900);transform-origin:right center;"><span style="">5,556</span></div>
<div style="position:absolute;white-space:nowrap;line-height:9.60px;font-size:9.60px;color:#262626;font-weight:normal;font-family:'Liberation Sans', sans-serif;top:492.48px;left:433.06px;transform:scaleX(0.900);transform-origin:left center;"><span style="">$</span></div>
<div style="position:absolute;white-space:nowrap;line-height:9.60px;font-size:9.60px;color:#262626;font-weight:normal;font-family:'Liberation Sans', sans-serif;top:492.48px;right:483.88px;transform:scaleX(0.900);transform-origin:right center;"><span style="">5,424</span></div>
<div style="position:absolute;white-space:nowrap;line-height:9.60px;font-size:9.60px;color:#262626;font-weight:normal;font-family:'Liberation Sans', sans-serif;top:492.48px;left:507.81px;transform:scaleX(0.900);transform-origin:left center;"><span style="">$</span></div>
<div style="position:absolute;white-space:nowrap;line-height:9.60px;font-size:9.60px;color:#262626;font-weight:normal;font-family:'Liberation Sans', sans-serif;top:492.48px;right:409.13px;transform:scaleX(0.900);transform-origin:right center;"><span style="">5,784</span></div>
<div style="position:absolute;white-space:nowrap;line-height:9.60px;font-size:9.60px;color:#262626;font-weight:normal;font-family:'Liberation Sans', sans-serif;top:492.48px;left:582.56px;transform:scaleX(0.900);transform-origin:left center;"><span style="">$</span></div>
<div style="position:absolute;white-space:nowrap;line-height:9.60px;font-size:9.60px;color:#262626;font-weight:normal;font-family:'Liberation Sans', sans-serif;top:492.48px;right:334.25px;transform:scaleX(0.900);transform-origin:right center;"><span style="">5,883</span></div>
<div style="position:absolute;white-space:nowrap;line-height:9.60px;font-size:9.60px;color:#262626;font-weight:normal;font-family:'Liberation Sans', sans-serif;top:492.48px;left:657.31px;transform:scaleX(0.900);transform-origin:left center;"><span style="">$</span></div>
<div style="position:absolute;white-space:nowrap;line-height:9.60px;font-size:9.60px;color:#262626;font-weight:normal;font-family:'Liberation Sans', sans-serif;top:492.48px;right:259.46px;transform:scaleX(0.900);transform-origin:right center;"><span style="">5,892</span></div>
<div style="position:absolute;white-space:nowrap;line-height:9.60px;font-size:9.60px;color:#262626;font-weight:normal;font-family:'Liberation Sans', sans-serif;top:492.48px;left:732.06px;transform:scaleX(0.900);transform-origin:left center;"><span style="">$</span></div>
<div style="position:absolute;white-space:nowrap;line-height:9.60px;font-size:9.60px;color:#262626;font-weight:normal;font-family:'Liberation Sans', sans-serif;top:492.48px;right:184.88px;transform:scaleX(0.900);transform-origin:right center;"><span style="">5,304</span></div>
<div style="position:absolute;white-space:nowrap;line-height:9.60px;font-size:9.60px;color:#262626;font-weight:normal;font-family:'Liberation Sans', sans-serif;top:492.48px;left:806.81px;transform:scaleX(0.900);transform-origin:left center;"><span style="">$</span></div>
<div style="position:absolute;white-space:nowrap;line-height:9.60px;font-size:9.60px;color:#262626;font-weight:normal;font-family:'Liberation Sans', sans-serif;top:492.48px;right:110.01px;transform:scaleX(0.900);transform-origin:right center;"><span style="">33,843</span></div>
<div style="position:absolute;white-space:nowrap;line-height:9.60px;font-size:9.60px;color:#2a2a2a;font-weight:bold;font-family:'Liberation Sans', sans-serif;top:504.73px;right:674.12px;transform:scaleX(0.880);transform-origin:right center;"><span style="">Freelancers</span></div>
<div style="position:absolute;white-space:nowrap;line-height:9.60px;font-size:9.60px;color:#262626;font-weight:normal;font-family:'Liberation Sans', sans-serif;top:504.73px;left:358.31px;transform:scaleX(0.900);transform-origin:left center;"><span style="">$</span></div>
<div style="position:absolute;white-space:nowrap;line-height:9.60px;font-size:9.60px;color:#262626;font-weight:normal;font-family:'Liberation Sans', sans-serif;top:504.73px;right:558.63px;transform:scaleX(0.900);transform-origin:right center;"><span style="">5,604</span></div>
<div style="position:absolute;white-space:nowrap;line-height:9.60px;font-size:9.60px;color:#262626;font-weight:normal;font-family:'Liberation Sans', sans-serif;top:504.73px;left:433.06px;transform:scaleX(0.900);transform-origin:left center;"><span style="">$</span></div>
<div style="position:absolute;white-space:nowrap;line-height:9.60px;font-size:9.60px;color:#262626;font-weight:normal;font-family:'Liberation Sans', sans-serif;top:504.73px;right:483.75px;transform:scaleX(0.900);transform-origin:right center;"><span style="">5,556</span></div>
<div style="position:absolute;white-space:nowrap;line-height:9.60px;font-size:9.60px;color:#262626;font-weight:normal;font-family:'Liberation Sans', sans-serif;top:504.73px;left:507.81px;transform:scaleX(0.900);transform-origin:left center;"><span style="">$</span></div>
<div style="position:absolute;white-space:nowrap;line-height:9.60px;font-size:9.60px;color:#262626;font-weight:normal;font-family:'Liberation Sans', sans-serif;top:504.73px;right:409.04px;transform:scaleX(0.900);transform-origin:right center;"><span style="">5,700</span></div>
<div style="position:absolute;white-space:nowrap;line-height:9.60px;font-size:9.60px;color:#262626;font-weight:normal;font-family:'Liberation Sans', sans-serif;top:504.73px;left:582.56px;transform:scaleX(0.900);transform-origin:left center;"><span style="">$</span></div>
<div style="position:absolute;white-space:nowrap;line-height:9.60px;font-size:9.60px;color:#262626;font-weight:normal;font-family:'Liberation Sans', sans-serif;top:504.73px;right:334.25px;transform:scaleX(0.900);transform-origin:right center;"><span style="">5,438</span></div>
<div style="position:absolute;white-space:nowrap;line-height:9.60px;font-size:9.60px;color:#262626;font-weight:normal;font-family:'Liberation Sans', sans-serif;top:504.73px;left:657.31px;transform:scaleX(0.900);transform-origin:left center;"><span style="">$</span></div>
<div style="position:absolute;white-space:nowrap;line-height:9.60px;font-size:9.60px;color:#262626;font-weight:normal;font-family:'Liberation Sans', sans-serif;top:504.73px;right:259.63px;transform:scaleX(0.900);transform-origin:right center;"><span style="">5,844</span></div>
<div style="position:absolute;white-space:nowrap;line-height:9.60px;font-size:9.60px;color:#262626;font-weight:normal;font-family:'Liberation Sans', sans-serif;top:504.73px;left:732.06px;transform:scaleX(0.900);transform-origin:left center;"><span style="">$</span></div>
<div style="position:absolute;white-space:nowrap;line-height:9.60px;font-size:9.60px;color:#262626;font-weight:normal;font-family:'Liberation Sans', sans-serif;top:504.73px;right:184.88px;transform:scaleX(0.900);transform-origin:right center;"><span style="">6,324</span></div>
<div style="position:absolute;white-space:nowrap;line-height:9.60px;font-size:9.60px;color:#262626;font-weight:normal;font-family:'Liberation Sans', sans-serif;top:504.73px;left:806.81px;transform:scaleX(0.900);transform-origin:left center;"><span style="">$</span></div>
<div style="position:absolute;white-space:nowrap;line-height:9.60px;font-size:9.60px;color:#262626;font-weight:normal;font-family:'Liberation Sans', sans-serif;top:504.73px;right:110.01px;transform:scaleX(0.900);transform-origin:right center;"><span style="">34,466</span></div>
<div style="position:absolute;white-space:nowrap;line-height:9.60px;font-size:9.60px;color:#2a2a2a;font-weight:bold;font-family:'Liberation Sans', sans-serif;top:516.98px;right:682.43px;transform:scaleX(0.880);transform-origin:right center;"><span style="">Travel</span></div>
<div style="position:absolute;white-space:nowrap;line-height:9.60px;font-size:9.60px;color:#262626;font-weight:normal;font-family:'Liberation Sans', sans-serif;top:516.98px;left:358.31px;transform:scaleX(0.900);transform-origin:left center;"><span style="">$</span></div>
<div style="position:absolute;white-space:nowrap;line-height:9.60px;font-size:9.60px;color:#262626;font-weight:normal;font-family:'Liberation Sans', sans-serif;top:516.98px;right:558.50px;transform:scaleX(0.900);transform-origin:right center;"><span style="">1,476</span></div>
<div style="position:absolute;white-space:nowrap;line-height:9.60px;font-size:9.60px;color:#262626;font-weight:normal;font-family:'Liberation Sans', sans-serif;top:516.98px;left:433.06px;transform:scaleX(0.900);transform-origin:left center;"><span style="">$</span></div>
<div style="position:absolute;white-space:nowrap;line-height:9.60px;font-size:9.60px;color:#262626;font-weight:normal;font-family:'Liberation Sans', sans-serif;top:516.98px;right:483.88px;transform:scaleX(0.900);transform-origin:right center;"><span style="">1,104</span></div>
<div style="position:absolute;white-space:nowrap;line-height:9.60px;font-size:9.60px;color:#262626;font-weight:normal;font-family:'Liberation Sans', sans-serif;top:516.98px;left:507.81px;transform:scaleX(0.900);transform-origin:left center;"><span style="">$</span></div>
<div style="position:absolute;white-space:nowrap;line-height:9.60px;font-size:9.60px;color:#262626;font-weight:normal;font-family:'Liberation Sans', sans-serif;top:516.98px;right:409.00px;transform:scaleX(0.900);transform-origin:right center;"><span style="">696</span></div>
<div style="position:absolute;white-space:nowrap;line-height:9.60px;font-size:9.60px;color:#262626;font-weight:normal;font-family:'Liberation Sans', sans-serif;top:516.98px;left:582.56px;transform:scaleX(0.900);transform-origin:left center;"><span style="">$</span></div>
<div style="position:absolute;white-space:nowrap;line-height:9.60px;font-size:9.60px;color:#262626;font-weight:normal;font-family:'Liberation Sans', sans-serif;top:516.98px;right:334.25px;transform:scaleX(0.900);transform-origin:right center;"><span style="">1,595</span></div>
<div style="position:absolute;white-space:nowrap;line-height:9.60px;font-size:9.60px;color:#262626;font-weight:normal;font-family:'Liberation Sans', sans-serif;top:516.98px;left:657.31px;transform:scaleX(0.900);transform-origin:left center;"><span style="">$</span></div>
<div style="position:absolute;white-space:nowrap;line-height:9.60px;font-size:9.60px;color:#262626;font-weight:normal;font-family:'Liberation Sans', sans-serif;top:516.98px;right:259.45px;transform:scaleX(0.900);transform-origin:right center;"><span style="">492</span></div>
<div style="position:absolute;white-space:nowrap;line-height:9.60px;font-size:9.60px;color:#262626;font-weight:normal;font-family:'Liberation Sans', sans-serif;top:516.98px;left:732.06px;transform:scaleX(0.900);transform-origin:left center;"><span style="">$</span></div>
<div style="position:absolute;white-space:nowrap;line-height:9.60px;font-size:9.60px;color:#262626;font-weight:normal;font-family:'Liberation Sans', sans-serif;top:516.98px;right:184.79px;transform:scaleX(0.900);transform-origin:right center;"><span style="">1,260</span></div>
<div style="position:absolute;white-space:nowrap;line-height:9.60px;font-size:9.60px;color:#262626;font-weight:normal;font-family:'Liberation Sans', sans-serif;top:516.98px;left:806.81px;transform:scaleX(0.900);transform-origin:left center;"><span style="">$</span></div>
<div style="position:absolute;white-space:nowrap;line-height:9.60px;font-size:9.60px;color:#262626;font-weight:normal;font-family:'Liberation Sans', sans-serif;top:516.98px;right:110.00px;transform:scaleX(0.900);transform-origin:right center;"><span style="">6,623</span></div>
<div style="position:absolute;white-space:nowrap;line-height:9.60px;font-size:9.60px;color:#2a2a2a;font-weight:bold;font-family:'Liberation Sans', sans-serif;top:529.23px;right:682.89px;transform:scaleX(0.880);transform-origin:right center;"><span style="">Other</span></div>
<div style="position:absolute;white-space:nowrap;line-height:9.60px;font-size:9.60px;color:#262626;font-weight:normal;font-family:'Liberation Sans', sans-serif;top:529.23px;left:358.31px;transform:scaleX(0.900);transform-origin:left center;"><span style="">$</span></div>
<div style="position:absolute;white-space:nowrap;line-height:9.60px;font-size:9.60px;color:#262626;font-weight:normal;font-family:'Liberation Sans', sans-serif;top:529.23px;right:558.50px;transform:scaleX(0.900);transform-origin:right center;"><span style="">6,168</span></div>
<div style="position:absolute;white-space:nowrap;line-height:9.60px;font-size:9.60px;color:#262626;font-weight:normal;font-family:'Liberation Sans', sans-serif;top:529.23px;left:433.06px;transform:scaleX(0.900);transform-origin:left center;"><span style="">$</span></div>
<div style="position:absolute;white-space:nowrap;line-height:9.60px;font-size:9.60px;color:#262626;font-weight:normal;font-family:'Liberation Sans', sans-serif;top:529.23px;right:483.71px;transform:scaleX(0.900);transform-origin:right center;"><span style="">6,672</span></div>
<div style="position:absolute;white-space:nowrap;line-height:9.60px;font-size:9.60px;color:#262626;font-weight:normal;font-family:'Liberation Sans', sans-serif;top:529.23px;left:507.81px;transform:scaleX(0.900);transform-origin:left center;"><span style="">$</span></div>
<div style="position:absolute;white-space:nowrap;line-height:9.60px;font-size:9.60px;color:#262626;font-weight:normal;font-family:'Liberation Sans', sans-serif;top:529.23px;right:408.96px;transform:scaleX(0.900);transform-origin:right center;"><span style="">6,732</span></div>
<div style="position:absolute;white-space:nowrap;line-height:9.60px;font-size:9.60px;color:#262626;font-weight:normal;font-family:'Liberation Sans', sans-serif;top:529.23px;left:582.56px;transform:scaleX(0.900);transform-origin:left center;"><span style="">$</span></div>
<div style="position:absolute;white-space:nowrap;line-height:9.60px;font-size:9.60px;color:#262626;font-weight:normal;font-family:'Liberation Sans', sans-serif;top:529.23px;right:334.21px;transform:scaleX(0.900);transform-origin:right center;"><span style="">7,032</span></div>
<div style="position:absolute;white-space:nowrap;line-height:9.60px;font-size:9.60px;color:#262626;font-weight:normal;font-family:'Liberation Sans', sans-serif;top:529.23px;left:657.31px;transform:scaleX(0.900);transform-origin:left center;"><span style="">$</span></div>
<div style="position:absolute;white-space:nowrap;line-height:9.60px;font-size:9.60px;color:#262626;font-weight:normal;font-family:'Liberation Sans', sans-serif;top:529.23px;right:259.63px;transform:scaleX(0.900);transform-origin:right center;"><span style="">6,504</span></div>
<div style="position:absolute;white-space:nowrap;line-height:9.60px;font-size:9.60px;color:#262626;font-weight:normal;font-family:'Liberation Sans', sans-serif;top:529.23px;left:732.06px;transform:scaleX(0.900);transform-origin:left center;"><span style="">$</span></div>
<div style="position:absolute;white-space:nowrap;line-height:9.60px;font-size:9.60px;color:#262626;font-weight:normal;font-family:'Liberation Sans', sans-serif;top:529.23px;right:184.88px;transform:scaleX(0.900);transform-origin:right center;"><span style="">6,804</span></div>
<div style="position:absolute;white-space:nowrap;line-height:9.60px;font-size:9.60px;color:#262626;font-weight:normal;font-family:'Liberation Sans', sans-serif;top:529.23px;left:806.81px;transform:scaleX(0.900);transform-origin:left center;"><span style="">$</span></div>
<div style="position:absolute;white-space:nowrap;line-height:9.60px;font-size:9.60px;color:#262626;font-weight:normal;font-family:'Liberation Sans', sans-serif;top:529.23px;right:109.97px;transform:scaleX(0.900);transform-origin:right center;"><span style="">39,912</span></div>
<div style="position:absolute;white-space:nowrap;line-height:9.60px;font-size:9.60px;color:#2a2a2a;font-weight:bold;font-family:'Liberation Sans', sans-serif;top:541.48px;right:682.89px;transform:scaleX(0.880);transform-origin:right center;"><span style="">Other</span></div>
<div style="position:absolute;white-space:nowrap;line-height:9.60px;font-size:9.60px;color:#262626;font-weight:normal;font-family:'Liberation Sans', sans-serif;top:541.48px;left:358.31px;transform:scaleX(0.900);transform-origin:left center;"><span style="">$</span></div>
<div style="position:absolute;white-space:nowrap;line-height:9.60px;font-size:9.60px;color:#262626;font-weight:normal;font-family:'Liberation Sans', sans-serif;top:541.48px;right:558.54px;transform:scaleX(0.900);transform-origin:right center;"><span style="">2,460</span></div>
<div style="position:absolute;white-space:nowrap;line-height:9.60px;font-size:9.60px;color:#262626;font-weight:normal;font-family:'Liberation Sans', sans-serif;top:541.48px;left:433.06px;transform:scaleX(0.900);transform-origin:left center;"><span style="">$</span></div>
<div style="position:absolute;white-space:nowrap;line-height:9.60px;font-size:9.60px;color:#262626;font-weight:normal;font-family:'Liberation Sans', sans-serif;top:541.48px;right:483.88px;transform:scaleX(0.900);transform-origin:right center;"><span style="">2,724</span></div>
<div style="position:absolute;white-space:nowrap;line-height:9.60px;font-size:9.60px;color:#262626;font-weight:normal;font-family:'Liberation Sans', sans-serif;top:541.48px;left:507.81px;transform:scaleX(0.900);transform-origin:left center;"><span style="">$</span></div>
<div style="position:absolute;white-space:nowrap;line-height:9.60px;font-size:9.60px;color:#262626;font-weight:normal;font-family:'Liberation Sans', sans-serif;top:541.48px;right:409.04px;transform:scaleX(0.900);transform-origin:right center;"><span style="">3,720</span></div>
<div style="position:absolute;white-space:nowrap;line-height:9.60px;font-size:9.60px;color:#262626;font-weight:normal;font-family:'Liberation Sans', sans-serif;top:541.48px;left:582.56px;transform:scaleX(0.900);transform-origin:left center;"><span style="">$</span></div>
<div style="position:absolute;white-space:nowrap;line-height:9.60px;font-size:9.60px;color:#262626;font-weight:normal;font-family:'Liberation Sans', sans-serif;top:541.48px;right:334.21px;transform:scaleX(0.900);transform-origin:right center;"><span style="">2,847</span></div>
<div style="position:absolute;white-space:nowrap;line-height:9.60px;font-size:9.60px;color:#262626;font-weight:normal;font-family:'Liberation Sans', sans-serif;top:541.48px;left:657.31px;transform:scaleX(0.900);transform-origin:left center;"><span style="">$</span></div>
<div style="position:absolute;white-space:nowrap;line-height:9.60px;font-size:9.60px;color:#262626;font-weight:normal;font-family:'Liberation Sans', sans-serif;top:541.48px;right:259.50px;transform:scaleX(0.900);transform-origin:right center;"><span style="">2,556</span></div>
<div style="position:absolute;white-space:nowrap;line-height:9.60px;font-size:9.60px;color:#262626;font-weight:normal;font-family:'Liberation Sans', sans-serif;top:541.48px;left:732.06px;transform:scaleX(0.900);transform-origin:left center;"><span style="">$</span></div>
<div style="position:absolute;white-space:nowrap;line-height:9.60px;font-size:9.60px;color:#262626;font-weight:normal;font-family:'Liberation Sans', sans-serif;top:541.48px;right:184.75px;transform:scaleX(0.900);transform-origin:right center;"><span style="">2,568</span></div>
<div style="position:absolute;white-space:nowrap;line-height:9.60px;font-size:9.60px;color:#262626;font-weight:normal;font-family:'Liberation Sans', sans-serif;top:541.48px;left:806.81px;transform:scaleX(0.900);transform-origin:left center;"><span style="">$</span></div>
<div style="position:absolute;white-space:nowrap;line-height:9.60px;font-size:9.60px;color:#262626;font-weight:normal;font-family:'Liberation Sans', sans-serif;top:541.48px;right:110.01px;transform:scaleX(0.900);transform-origin:right center;"><span style="">16,875</span></div>
<div style="position:absolute;white-space:nowrap;line-height:9.60px;font-size:9.60px;color:#262626;font-weight:normal;font-family:'Liberation Sans', sans-serif;top:553.73px;left:358.31px;transform:scaleX(0.900);transform-origin:left center;"><span style="">$</span></div>
<div style="position:absolute;white-space:nowrap;line-height:9.60px;font-size:9.60px;color:#262626;font-weight:normal;font-family:'Liberation Sans', sans-serif;top:553.73px;right:558.64px;transform:scaleX(0.900);transform-origin:right center;"><span style="">43,104</span></div>
<div style="position:absolute;white-space:nowrap;line-height:9.60px;font-size:9.60px;color:#262626;font-weight:normal;font-family:'Liberation Sans', sans-serif;top:553.73px;left:433.06px;transform:scaleX(0.900);transform-origin:left center;"><span style="">$</span></div>
<div style="position:absolute;white-space:nowrap;line-height:9.60px;font-size:9.60px;color:#262626;font-weight:normal;font-family:'Liberation Sans', sans-serif;top:553.73px;right:483.80px;transform:scaleX(0.900);transform-origin:right center;"><span style="">43,080</span></div>
<div style="position:absolute;white-space:nowrap;line-height:9.60px;font-size:9.60px;color:#262626;font-weight:normal;font-family:'Liberation Sans', sans-serif;top:553.73px;left:507.81px;transform:scaleX(0.900);transform-origin:left center;"><span style="">$</span></div>
<div style="position:absolute;white-space:nowrap;line-height:9.60px;font-size:9.60px;color:#262626;font-weight:normal;font-family:'Liberation Sans', sans-serif;top:553.73px;right:409.01px;transform:scaleX(0.900);transform-origin:right center;"><span style="">42,588</span></div>
<div style="position:absolute;white-space:nowrap;line-height:9.60px;font-size:9.60px;color:#262626;font-weight:normal;font-family:'Liberation Sans', sans-serif;top:553.73px;left:582.56px;transform:scaleX(0.900);transform-origin:left center;"><span style="">$</span></div>
<div style="position:absolute;white-space:nowrap;line-height:9.60px;font-size:9.60px;color:#262626;font-weight:normal;font-family:'Liberation Sans', sans-serif;top:553.73px;right:334.26px;transform:scaleX(0.900);transform-origin:right center;"><span style="">28,705</span></div>
<div style="position:absolute;white-space:nowrap;line-height:9.60px;font-size:9.60px;color:#262626;font-weight:normal;font-family:'Liberation Sans', sans-serif;top:553.73px;left:657.31px;transform:scaleX(0.900);transform-origin:left center;"><span style="">$</span></div>
<div style="position:absolute;white-space:nowrap;line-height:9.60px;font-size:9.60px;color:#262626;font-weight:normal;font-family:'Liberation Sans', sans-serif;top:553.73px;right:259.51px;transform:scaleX(0.900);transform-origin:right center;"><span style="">44,183</span></div>
<div style="position:absolute;white-space:nowrap;line-height:9.60px;font-size:9.60px;color:#262626;font-weight:normal;font-family:'Liberation Sans', sans-serif;top:553.73px;left:732.06px;transform:scaleX(0.900);transform-origin:left center;"><span style="">$</span></div>
<div style="position:absolute;white-space:nowrap;line-height:9.60px;font-size:9.60px;color:#262626;font-weight:normal;font-family:'Liberation Sans', sans-serif;top:553.73px;right:184.76px;transform:scaleX(0.900);transform-origin:right center;"><span style="">43,776</span></div>
<div style="position:absolute;white-space:nowrap;line-height:9.60px;font-size:9.60px;color:#262626;font-weight:normal;font-family:'Liberation Sans', sans-serif;top:553.73px;left:806.81px;transform:scaleX(0.900);transform-origin:left center;"><span style="">$</span></div>
<div style="position:absolute;white-space:nowrap;line-height:9.60px;font-size:9.60px;color:#262626;font-weight:normal;font-family:'Liberation Sans', sans-serif;top:553.73px;right:110.01px;transform:scaleX(0.900);transform-origin:right center;"><span style="">245,436</span></div>
<div style="position:absolute;left:1.80px;top:294.00px;width:2.20px;height:24.50px;background:#2a2a2a;border-radius:1px;"></div><div style="position:absolute;left:1.80px;top:345.70px;width:2.20px;height:45.00px;background:#2a2a2a;border-radius:1px;"></div><div style="position:absolute;left:301.50px;top:346.40px;width:2.20px;height:45.00px;background:#333;border-radius:1px;"></div><div style="position:absolute;left:3.50px;top:217.50px;width:299.50px;height:420.00px;background:#050505;border-radius:42px;"></div><div style="position:absolute;left:5px;top:218.8px;width:295.5px;height:400px;border-radius:41px;box-sizing:border-box;border:2px solid #bcbcbc;border-top:0.9px solid #5a5a5a;"></div><div style="position:absolute;left:10px;top:224px;width:286.5px;height:400px;border-radius:37px 37px 0 0;background:linear-gradient(90deg,#d6d6d6 0px,#c4c4c4 1.6px,#3a3a3a 5.2px,#050505 6px,#050505 279.5px,#2e2e2e 280.5px,#dadada 285.5px,#cfcfcf 286.5px);-webkit-mask-image:linear-gradient(180deg,transparent 2px,#000 26px);"></div><div style="position:absolute;left:15.80px;top:225.50px;width:274.50px;height:400.00px;background:#050505;border-radius:33px 33px 0 0;"></div><div style="position:absolute;left:101.5px;top:252px;width:8px;height:8px;border-radius:50%;background:radial-gradient(circle at 50% 50%,#3050a0 0,#1a2a60 35%,#0a0f20 70%,#050505 100%);"></div><div style="position:absolute;left:126.70px;top:253.70px;width:52.30px;height:4.10px;background:#2f2f2f;border-radius:2px;"></div><div style="position:absolute;left:22.50px;top:295.00px;width:260.30px;height:270.00px;background:#ffffff;"></div><div style="position:absolute;left:22.50px;top:295.00px;width:260.30px;height:41.80px;background:#237548;"></div><div style="position:absolute;left:22.50px;top:336.80px;width:260.30px;height:38.60px;background:#ececec;"></div><div style="position:absolute;left:25.70px;top:341.00px;width:253.30px;height:17.50px;background:#ffffff;"></div><div style="position:absolute;left:50.20px;top:341.00px;width:0.80px;height:17.50px;background:#e2e2e2;"></div><div style="position:absolute;left:22.50px;top:375.40px;width:21.40px;height:200.00px;background:#efefef;"></div><div style="position:absolute;left:43.90px;top:375.40px;width:238.90px;height:14.10px;background:#137a17;"></div><div style="position:absolute;left:44.50px;top:392.50px;width:231.50px;height:121.50px;background:#ffffff;box-shadow:0 0 0 0.6px #e8e8e8;"></div><div style="position:absolute;left:43.90px;top:515.40px;width:238.00px;height:8.00px;background:#ffffff;"></div><div style="position:absolute;left:43.90px;top:523.30px;width:238.00px;height:7.40px;background:#dbe4f0;"></div><div style="position:absolute;left:43.90px;top:537.98px;width:238.00px;height:7.40px;background:#dbe4f0;"></div><div style="position:absolute;left:43.90px;top:552.66px;width:238.00px;height:7.40px;background:#dbe4f0;"></div>
<svg style="position:absolute;left:0;top:0" width="981" height="560" viewBox="0 0 981 560"><defs><filter id="blur1" x="-20%" y="-20%" width="140%" height="140%"><feGaussianBlur stdDeviation="1.2"/></filter></defs><path d="M88.0 362V375" stroke="#d4d4d4" stroke-width="0.6"/><path d="M127.0 362V375" stroke="#d4d4d4" stroke-width="0.6"/><path d="M163.2 362V375" stroke="#d4d4d4" stroke-width="0.6"/><path d="M199.8 362V375" stroke="#d4d4d4" stroke-width="0.6"/><path d="M235.5 362V375" stroke="#d4d4d4" stroke-width="0.6"/><path d="M22.5 361.2H283" stroke="#dcdcdc" stroke-width="0.6"/><path d="M43.9 362V560" stroke="#d8d8d8" stroke-width="0.6"/><path d="M22.5 398.6H43.9" stroke="#dddddd" stroke-width="0.4"/><path d="M22.5 405.9H43.9" stroke="#dddddd" stroke-width="0.4"/><path d="M22.5 413.2H43.9" stroke="#dddddd" stroke-width="0.4"/><path d="M22.5 420.6H43.9" stroke="#dddddd" stroke-width="0.4"/><path d="M22.5 427.9H43.9" stroke="#dddddd" stroke-width="0.4"/><path d="M22.5 435.3H43.9" stroke="#dddddd" stroke-width="0.4"/><path d="M22.5 442.6H43.9" stroke="#dddddd" stroke-width="0.4"/><path d="M22.5 449.9H43.9" stroke="#dddddd" stroke-width="0.4"/><path d="M22.5 457.3H43.9" stroke="#dddddd" stroke-width="0.4"/><path d="M22.5 464.6H43.9" stroke="#dddddd" stroke-width="0.4"/><path d="M22.5 472.0H43.9" stroke="#dddddd" stroke-width="0.4"/><path d="M22.5 479.3H43.9" stroke="#dddddd" stroke-width="0.4"/><path d="M22.5 486.6H43.9" stroke="#dddddd" stroke-width="0.4"/><path d="M22.5 494.0H43.9" stroke="#dddddd" stroke-width="0.4"/><path d="M22.5 501.3H43.9" stroke="#dddddd" stroke-width="0.4"/><path d="M22.5 508.7H43.9" stroke="#dddddd" stroke-width="0.4"/><path d="M22.5 516.0H43.9" stroke="#dddddd" stroke-width="0.4"/><path d="M22.5 523.3H43.9" stroke="#dddddd" stroke-width="0.4"/><path d="M22.5 530.7H43.9" stroke="#dddddd" stroke-width="0.4"/><path d="M22.5 538.0H43.9" stroke="#dddddd" stroke-width="0.4"/><path d="M22.5 545.4H43.9" stroke="#dddddd" stroke-width="0.4"/><path d="M22.5 552.7H43.9" stroke="#dddddd" stroke-width="0.4"/><path d="M22.5 560.0H43.9" stroke="#dddddd" stroke-width="0.4"/><path d="M22.5 567.4H43.9" stroke="#dddddd" stroke-width="0.4"/><rect x="84.5" y="454.0" width="33.6" height="45.8" fill="#000" opacity="0.10" filter="url(#blur1)"/><rect x="83.0" y="453.0" width="33.6" height="45.8" fill="#4472c4"/><rect x="134.5" y="454.2" width="33.6" height="45.5" fill="#000" opacity="0.10" filter="url(#blur1)"/><rect x="133.0" y="453.2" width="33.6" height="45.5" fill="#ed7d31"/><rect x="184.0" y="469.0" width="33.6" height="30.8" fill="#000" opacity="0.10" filter="url(#blur1)"/><rect x="182.5" y="468.0" width="33.6" height="30.8" fill="#a5a5a5"/><rect x="234.8" y="426.8" width="33.6" height="73.0" fill="#000" opacity="0.10" filter="url(#blur1)"/><rect x="233.2" y="425.8" width="33.6" height="73.0" fill="#ffc000"/><path d="M72 498.9H274" stroke="#dedede" stroke-width="0.5"/><path d="M43.9 515.6H282" stroke="#8eaadb" stroke-width="1.2"/><path d="M43.9 523.1H282" stroke="#8eaadb" stroke-width="0.9"/><polyline points="241.7,524.1 253.7,527.2 265.4,529.2 277.2,526.4" fill="none" stroke="#7b95c2" stroke-width="0.8"/><circle cx="241.7" cy="524.1" r="0.9" fill="#e0524c"/><circle cx="253.7" cy="527.2" r="0.9" fill="#e0524c"/><circle cx="265.4" cy="529.2" r="0.9" fill="#e0524c"/><circle cx="277.2" cy="526.4" r="0.9" fill="#e0524c"/><polyline points="241.7,536.3 253.7,531.3 265.4,534.0 277.2,531.8" fill="none" stroke="#7b95c2" stroke-width="0.8"/><circle cx="241.7" cy="536.3" r="0.9" fill="#e0524c"/><circle cx="253.7" cy="531.3" r="0.9" fill="#e0524c"/><circle cx="265.4" cy="534.0" r="0.9" fill="#e0524c"/><circle cx="277.2" cy="531.8" r="0.9" fill="#e0524c"/><polyline points="241.7,542.9 253.7,544.4 265.4,539.9 277.2,538.6" fill="none" stroke="#7b95c2" stroke-width="0.8"/><circle cx="241.7" cy="542.9" r="0.9" fill="#e0524c"/><circle cx="253.7" cy="544.4" r="0.9" fill="#e0524c"/><circle cx="265.4" cy="539.9" r="0.9" fill="#e0524c"/><circle cx="277.2" cy="538.6" r="0.9" fill="#e0524c"/><polyline points="241.7,549.3 253.7,550.9 265.4,546.3 277.2,551.2" fill="none" stroke="#7b95c2" stroke-width="0.8"/><circle cx="241.7" cy="549.3" r="0.9" fill="#e0524c"/><circle cx="253.7" cy="550.9" r="0.9" fill="#e0524c"/><circle cx="265.4" cy="546.3" r="0.9" fill="#e0524c"/><circle cx="277.2" cy="551.2" r="0.9" fill="#e0524c"/><polyline points="241.7,554.2 253.7,557.0 265.4,558.5 277.2,553.6" fill="none" stroke="#7b95c2" stroke-width="0.8"/><circle cx="241.7" cy="554.2" r="0.9" fill="#e0524c"/><circle cx="253.7" cy="557.0" r="0.9" fill="#e0524c"/><circle cx="265.4" cy="558.5" r="0.9" fill="#e0524c"/><circle cx="277.2" cy="553.6" r="0.9" fill="#e0524c"/><path d="M38.8 319.8L31.9 326.7l6.9 6.9" fill="none" stroke="#fff" stroke-width="2"/><path d="M164 323.5h6a4 4 0 0 1 0 8h-3M164 323.5l3-3M164 323.5l3 3" fill="none" stroke="#fff" stroke-width="1.2"/><path d="M188.5 332l5-12 3 7M190.3 327.5h5" fill="none" stroke="#fff" stroke-width="1.1"/><path d="M193 332.5l8-7.5 1 1-7.5 7.7z" fill="none" stroke="#fff" stroke-width="1"/><circle cx="220.8" cy="325.3" r="4.3" fill="none" stroke="#fff" stroke-width="1.3"/><path d="M223.8 328.4l3.6 3.6" stroke="#fff" stroke-width="1.4"/><path d="M242.5 327v5.5h11.5v-3" fill="none" stroke="#fff" stroke-width="1.1"/><path d="M245.5 330q1-6 8-6v-2.5l3.5 4-3.5 4v-2.5q-5 0-8 3z" fill="none" stroke="#fff" stroke-width="1"/><circle cx="265.5" cy="326.8" r="1.2" fill="#fff"/><circle cx="270" cy="326.8" r="1.2" fill="#fff"/><circle cx="274.5" cy="326.8" r="1.2" fill="#fff"/><path d="M52 299.5a6.5 6.5 0 0 1 8.5 0M53.5 301.3a4 4 0 0 1 5.5 0" fill="none" stroke="#fff" stroke-width="1.1"/><circle cx="56.2" cy="303.2" r="1" fill="#fff"/><path d="M234.8 299.5l3 2.5-1.5 1.2v-5.6l1.5 1.2-3 2.5" fill="none" stroke="#fff" stroke-width="0.7"/><rect x="264.6" y="298.6" width="13.3" height="5.3" rx="0.8" fill="#fff"/><rect x="278.3" y="300.2" width="1" height="2.2" fill="#fff"/><path d="M268.8 346.5l3 3 3-3" fill="none" stroke="#444" stroke-width="1.1"/><text x="32" y="353.5" font-size="11.5" font-style="italic" font-family="Liberation Serif" fill="#444">fx</text></svg>
<div style="position:absolute;white-space:nowrap;line-height:7.31px;font-size:7.31px;color:#fff;font-weight:normal;font-family:'Liberation Sans', sans-serif;top:298.44px;left:26.12px;"><span style="">iPhone</span></div>
<div style="position:absolute;white-space:nowrap;line-height:6.90px;font-size:6.90px;color:#fff;font-weight:normal;font-family:'Liberation Sans', sans-serif;top:298.63px;left:139.85px;"><span style="">2:30 PM</span></div>
<div style="position:absolute;white-space:nowrap;line-height:6.92px;font-size:6.92px;color:#fff;font-weight:normal;font-family:'Liberation Sans', sans-serif;top:298.62px;left:241.28px;"><span style="">100%</span></div>
<div style="position:absolute;white-space:nowrap;line-height:6.34px;font-size:6.34px;color:#7fb394;font-weight:normal;font-family:'Liberation Sans', sans-serif;top:310.38px;left:126.28px;"><span style="">Contoso Expenses</span></div>
<div style="position:absolute;white-space:nowrap;line-height:5.50px;font-size:5.50px;color:#555;font-weight:bold;font-family:'Liberation Sans', sans-serif;top:366.07px;left:-37.89px;width:210.00px;text-align:center;"><span style="">A</span></div>
<div style="position:absolute;white-space:nowrap;line-height:5.50px;font-size:5.50px;color:#555;font-weight:bold;font-family:'Liberation Sans', sans-serif;top:366.07px;left:3.69px;width:210.00px;text-align:center;"><span style="">B</span></div>
<div style="position:absolute;white-space:nowrap;line-height:5.50px;font-size:5.50px;color:#555;font-weight:bold;font-family:'Liberation Sans', sans-serif;top:366.07px;left:39.47px;width:210.00px;text-align:center;"><span style="">C</span></div>
<div style="position:absolute;white-space:nowrap;line-height:5.50px;font-size:5.50px;color:#555;font-weight:bold;font-family:'Liberation Sans', sans-serif;top:366.07px;left:75.93px;width:210.00px;text-align:center;"><span style="">D</span></div>
<div style="position:absolute;white-space:nowrap;line-height:5.50px;font-size:5.50px;color:#555;font-weight:bold;font-family:'Liberation Sans', sans-serif;top:366.07px;left:111.92px;width:210.00px;text-align:center;"><span style="">E</span></div>
<div style="position:absolute;white-space:nowrap;line-height:5.50px;font-size:5.50px;color:#555;font-weight:bold;font-family:'Liberation Sans', sans-serif;top:366.07px;left:153.13px;width:210.00px;text-align:center;"><span style="">F</span></div>
<div style="position:absolute;white-space:nowrap;line-height:6.30px;font-size:6.30px;color:#444;font-weight:normal;font-family:'Liberation Sans', sans-serif;top:383.70px;left:-76.58px;width:220.00px;text-align:center;"><span style="">1</span></div>
<div style="position:absolute;white-space:nowrap;line-height:6.30px;font-size:6.30px;color:#444;font-weight:normal;font-family:'Liberation Sans', sans-serif;top:392.00px;left:-76.51px;width:220.00px;text-align:center;"><span style="">2</span></div>
<div style="position:absolute;white-space:nowrap;line-height:6.30px;font-size:6.30px;color:#444;font-weight:normal;font-family:'Liberation Sans', sans-serif;top:399.34px;left:-76.47px;width:220.00px;text-align:center;"><span style="">3</span></div>
<div style="position:absolute;white-space:nowrap;line-height:6.30px;font-size:6.30px;color:#444;font-weight:normal;font-family:'Liberation Sans', sans-serif;top:406.68px;left:-76.47px;width:220.00px;text-align:center;"><span style="">4</span></div>
<div style="position:absolute;white-space:nowrap;line-height:6.30px;font-size:6.30px;color:#444;font-weight:normal;font-family:'Liberation Sans', sans-serif;top:414.02px;left:-76.49px;width:220.00px;text-align:center;"><span style="">5</span></div>
<div style="position:absolute;white-space:nowrap;line-height:6.30px;font-size:6.30px;color:#444;font-weight:normal;font-family:'Liberation Sans', sans-serif;top:421.36px;left:-76.52px;width:220.00px;text-align:center;"><span style="">6</span></div>
<div style="position:absolute;white-space:nowrap;line-height:6.30px;font-size:6.30px;color:#444;font-weight:normal;font-family:'Liberation Sans', sans-serif;top:428.70px;left:-76.51px;width:220.00px;text-align:center;"><span style="">7</span></div>
<div style="position:absolute;white-space:nowrap;line-height:6.30px;font-size:6.30px;color:#444;font-weight:normal;font-family:'Liberation Sans', sans-serif;top:436.04px;left:-76.49px;width:220.00px;text-align:center;"><span style="">8</span></div>
<div style="position:absolute;white-space:nowrap;line-height:6.30px;font-size:6.30px;color:#444;font-weight:normal;font-family:'Liberation Sans', sans-serif;top:443.38px;left:-76.49px;width:220.00px;text-align:center;"><span style="">9</span></div>
<div style="position:absolute;white-space:nowrap;line-height:6.30px;font-size:6.30px;color:#444;font-weight:normal;font-family:'Liberation Sans', sans-serif;top:450.72px;left:-76.62px;width:220.00px;text-align:center;"><span style="">10</span></div>
<div style="position:absolute;white-space:nowrap;line-height:6.30px;font-size:6.30px;color:#444;font-weight:normal;font-family:'Liberation Sans', sans-serif;top:458.06px;left:-76.59px;width:220.00px;text-align:center;"><span style="">11</span></div>
<div style="position:absolute;white-space:nowrap;line-height:6.30px;font-size:6.30px;color:#444;font-weight:normal;font-family:'Liberation Sans', sans-serif;top:465.40px;left:-76.59px;width:220.00px;text-align:center;"><span style="">12</span></div>
<div style="position:absolute;white-space:nowrap;line-height:6.30px;font-size:6.30px;color:#444;font-weight:normal;font-family:'Liberation Sans', sans-serif;top:472.74px;left:-76.60px;width:220.00px;text-align:center;"><span style="">13</span></div>
<div style="position:absolute;white-space:nowrap;line-height:6.30px;font-size:6.30px;color:#444;font-weight:normal;font-family:'Liberation Sans', sans-serif;top:480.08px;left:-76.65px;width:220.00px;text-align:center;"><span style="">14</span></div>
<div style="position:absolute;white-space:nowrap;line-height:6.30px;font-size:6.30px;color:#444;font-weight:normal;font-family:'Liberation Sans', sans-serif;top:487.42px;left:-76.60px;width:220.00px;text-align:center;"><span style="">15</span></div>
<div style="position:absolute;white-space:nowrap;line-height:6.30px;font-size:6.30px;color:#444;font-weight:normal;font-family:'Liberation Sans', sans-serif;top:494.76px;left:-76.60px;width:220.00px;text-align:center;"><span style="">16</span></div>
<div style="position:absolute;white-space:nowrap;line-height:6.30px;font-size:6.30px;color:#444;font-weight:normal;font-family:'Liberation Sans', sans-serif;top:502.10px;left:-76.59px;width:220.00px;text-align:center;"><span style="">17</span></div>
<div style="position:absolute;white-space:nowrap;line-height:6.30px;font-size:6.30px;color:#444;font-weight:normal;font-family:'Liberation Sans', sans-serif;top:509.44px;left:-76.60px;width:220.00px;text-align:center;"><span style="">18</span></div>
<div style="position:absolute;white-space:nowrap;line-height:6.30px;font-size:6.30px;color:#444;font-weight:normal;font-family:'Liberation Sans', sans-serif;top:516.78px;left:-76.59px;width:220.00px;text-align:center;"><span style="">19</span></div>
<div style="position:absolute;white-space:nowrap;line-height:6.30px;font-size:6.30px;color:#444;font-weight:normal;font-family:'Liberation Sans', sans-serif;top:524.12px;left:-76.54px;width:220.00px;text-align:center;"><span style="">20</span></div>
<div style="position:absolute;white-space:nowrap;line-height:6.30px;font-size:6.30px;color:#444;font-weight:normal;font-family:'Liberation Sans', sans-serif;top:531.46px;left:-76.51px;width:220.00px;text-align:center;"><span style="">21</span></div>
<div style="position:absolute;white-space:nowrap;line-height:6.30px;font-size:6.30px;color:#444;font-weight:normal;font-family:'Liberation Sans', sans-serif;top:538.80px;left:-76.51px;width:220.00px;text-align:center;"><span style="">22</span></div>
<div style="position:absolute;white-space:nowrap;line-height:6.30px;font-size:6.30px;color:#444;font-weight:normal;font-family:'Liberation Sans', sans-serif;top:546.14px;left:-76.52px;width:220.00px;text-align:center;"><span style="">23</span></div>
<div style="position:absolute;white-space:nowrap;line-height:6.30px;font-size:6.30px;color:#444;font-weight:normal;font-family:'Liberation Sans', sans-serif;top:553.48px;left:-76.57px;width:220.00px;text-align:center;"><span style="">24</span></div>
<div style="position:absolute;white-space:nowrap;line-height:6.30px;font-size:6.30px;color:#444;font-weight:normal;font-family:'Liberation Sans', sans-serif;top:560.82px;left:-76.52px;width:220.00px;text-align:center;"><span style="">25</span></div>
<div style="position:absolute;white-space:nowrap;line-height:8.74px;font-size:8.74px;color:#f2f8ee;font-weight:normal;font-family:'Liberation Sans', sans-serif;top:378.18px;left:45.26px;"><span style="">Contoso Expenses</span></div>
<div style="position:absolute;white-space:nowrap;line-height:5.30px;font-size:5.30px;color:#888;font-weight:normal;font-family:'Liberation Sans', sans-serif;top:410.06px;right:912.06px;"><span style="">$44,500</span></div>
<div style="position:absolute;white-space:nowrap;line-height:5.30px;font-size:5.30px;color:#888;font-weight:normal;font-family:'Liberation Sans', sans-serif;top:424.44px;right:912.06px;"><span style="">$44,000</span></div>
<div style="position:absolute;white-space:nowrap;line-height:5.30px;font-size:5.30px;color:#888;font-weight:normal;font-family:'Liberation Sans', sans-serif;top:438.81px;right:912.06px;"><span style="">$43,500</span></div>
<div style="position:absolute;white-space:nowrap;line-height:5.30px;font-size:5.30px;color:#888;font-weight:normal;font-family:'Liberation Sans', sans-serif;top:453.19px;right:912.06px;"><span style="">$43,000</span></div>
<div style="position:absolute;white-space:nowrap;line-height:5.30px;font-size:5.30px;color:#888;font-weight:normal;font-family:'Liberation Sans', sans-serif;top:467.56px;right:912.06px;"><span style="">$42,500</span></div>
<div style="position:absolute;white-space:nowrap;line-height:5.30px;font-size:5.30px;color:#888;font-weight:normal;font-family:'Liberation Sans', sans-serif;top:481.94px;right:912.06px;"><span style="">$42,000</span></div>
<div style="position:absolute;white-space:nowrap;line-height:5.30px;font-size:5.30px;color:#888;font-weight:normal;font-family:'Liberation Sans', sans-serif;top:496.31px;right:912.06px;"><span style="">$41,500</span></div>
<div style="position:absolute;white-space:nowrap;line-height:5.30px;font-size:5.30px;color:#888;font-weight:normal;font-family:'Liberation Sans', sans-serif;top:503.36px;left:-10.51px;width:220.00px;text-align:center;"><span style="">2012</span></div>
<div style="position:absolute;white-space:nowrap;line-height:5.30px;font-size:5.30px;color:#888;font-weight:normal;font-family:'Liberation Sans', sans-serif;top:503.36px;left:39.98px;width:220.00px;text-align:center;"><span style="">2013</span></div>
<div style="position:absolute;white-space:nowrap;line-height:5.30px;font-size:5.30px;color:#888;font-weight:normal;font-family:'Liberation Sans', sans-serif;top:503.36px;left:89.44px;width:220.00px;text-align:center;"><span style="">2014</span></div>
<div style="position:absolute;white-space:nowrap;line-height:5.30px;font-size:5.30px;color:#888;font-weight:normal;font-family:'Liberation Sans', sans-serif;top:503.36px;left:139.98px;width:220.00px;text-align:center;"><span style="">2015</span></div>
<div style="position:absolute;white-space:nowrap;line-height:6.00px;font-size:6.00px;color:#222;font-weight:bold;font-family:'Liberation Sans', sans-serif;top:516.74px;left:44.76px;"><span style="">Category</span></div>
<div style="position:absolute;white-space:nowrap;line-height:6.00px;font-size:6.00px;color:#222;font-weight:bold;font-family:'Liberation Sans', sans-serif;top:516.74px;right:856.97px;"><span style="">2012</span></div>
<div style="position:absolute;white-space:nowrap;line-height:6.00px;font-size:6.00px;color:#222;font-weight:bold;font-family:'Liberation Sans', sans-serif;top:516.74px;right:819.97px;"><span style="">2013</span></div>
<div style="position:absolute;white-space:nowrap;line-height:6.00px;font-size:6.00px;color:#222;font-weight:bold;font-family:'Liberation Sans', sans-serif;top:516.74px;right:784.88px;"><span style="">2014</span></div>
<div style="position:absolute;white-space:nowrap;line-height:6.00px;font-size:6.00px;color:#222;font-weight:bold;font-family:'Liberation Sans', sans-serif;top:516.74px;right:748.63px;"><span style="">2015</span></div>
<div style="position:absolute;white-space:nowrap;line-height:5.50px;font-size:5.50px;color:#222;font-weight:bold;font-family:'Liberation Sans', sans-serif;top:516.97px;left:145.08px;width:227.00px;text-align:center;"><span style="">Trends</span></div>
<div style="position:absolute;white-space:nowrap;line-height:5.80px;font-size:5.80px;color:#4a4a4a;font-weight:normal;font-family:'Liberation Sans', sans-serif;top:524.33px;left:45.04px;"><span style="">Rent and Utilities</span></div>
<div style="position:absolute;white-space:nowrap;line-height:6.00px;font-size:6.00px;color:#4a4a4a;font-weight:normal;font-family:'Liberation Sans', sans-serif;top:524.24px;left:93.34px;"><span style="">$</span></div>
<div style="position:absolute;white-space:nowrap;line-height:6.00px;font-size:6.00px;color:#4a4a4a;font-weight:normal;font-family:'Liberation Sans', sans-serif;top:524.24px;right:856.98px;"><span style="">18,840</span></div>
<div style="position:absolute;white-space:nowrap;line-height:6.00px;font-size:6.00px;color:#4a4a4a;font-weight:normal;font-family:'Liberation Sans', sans-serif;top:524.24px;left:128.64px;"><span style="">$</span></div>
<div style="position:absolute;white-space:nowrap;line-height:6.00px;font-size:6.00px;color:#4a4a4a;font-weight:normal;font-family:'Liberation Sans', sans-serif;top:524.24px;right:820.45px;"><span style="">17,628</span></div>
<div style="position:absolute;white-space:nowrap;line-height:6.00px;font-size:6.00px;color:#4a4a4a;font-weight:normal;font-family:'Liberation Sans', sans-serif;top:524.24px;left:164.64px;"><span style="">$</span></div>
<div style="position:absolute;white-space:nowrap;line-height:6.00px;font-size:6.00px;color:#4a4a4a;font-weight:normal;font-family:'Liberation Sans', sans-serif;top:524.24px;right:785.15px;"><span style="">16,368</span></div>
<div style="position:absolute;white-space:nowrap;line-height:6.00px;font-size:6.00px;color:#4a4a4a;font-weight:normal;font-family:'Liberation Sans', sans-serif;top:524.24px;left:201.64px;"><span style="">$</span></div>
<div style="position:absolute;white-space:nowrap;line-height:6.00px;font-size:6.00px;color:#4a4a4a;font-weight:normal;font-family:'Liberation Sans', sans-serif;top:524.24px;right:749.05px;"><span style="">1,885</span></div>
<div style="position:absolute;white-space:nowrap;line-height:5.80px;font-size:5.80px;color:#4a4a4a;font-weight:normal;font-family:'Liberation Sans', sans-serif;top:531.67px;left:45.04px;"><span style="">Equipment</span></div>
<div style="position:absolute;white-space:nowrap;line-height:6.00px;font-size:6.00px;color:#4a4a4a;font-weight:normal;font-family:'Liberation Sans', sans-serif;top:531.58px;left:93.34px;"><span style="">$</span></div>
<div style="position:absolute;white-space:nowrap;line-height:6.00px;font-size:6.00px;color:#4a4a4a;font-weight:normal;font-family:'Liberation Sans', sans-serif;top:531.58px;right:856.98px;"><span style="">3,000</span></div>
<div style="position:absolute;white-space:nowrap;line-height:6.00px;font-size:6.00px;color:#4a4a4a;font-weight:normal;font-family:'Liberation Sans', sans-serif;top:531.58px;left:128.64px;"><span style="">$</span></div>
<div style="position:absolute;white-space:nowrap;line-height:6.00px;font-size:6.00px;color:#4a4a4a;font-weight:normal;font-family:'Liberation Sans', sans-serif;top:531.58px;right:820.42px;"><span style="">3,972</span></div>
<div style="position:absolute;white-space:nowrap;line-height:6.00px;font-size:6.00px;color:#4a4a4a;font-weight:normal;font-family:'Liberation Sans', sans-serif;top:531.58px;left:164.64px;"><span style="">$</span></div>
<div style="position:absolute;white-space:nowrap;line-height:6.00px;font-size:6.00px;color:#4a4a4a;font-weight:normal;font-family:'Liberation Sans', sans-serif;top:531.58px;right:785.15px;"><span style="">3,588</span></div>
<div style="position:absolute;white-space:nowrap;line-height:6.00px;font-size:6.00px;color:#4a4a4a;font-weight:normal;font-family:'Liberation Sans', sans-serif;top:531.58px;left:201.64px;"><span style="">$</span></div>
<div style="position:absolute;white-space:nowrap;line-height:6.00px;font-size:6.00px;color:#4a4a4a;font-weight:normal;font-family:'Liberation Sans', sans-serif;top:531.58px;right:749.05px;"><span style="">4,025</span></div>
<div style="position:absolute;white-space:nowrap;line-height:5.80px;font-size:5.80px;color:#4a4a4a;font-weight:normal;font-family:'Liberation Sans', sans-serif;top:539.01px;left:45.04px;"><span style="">Marketing</span></div>
<div style="position:absolute;white-space:nowrap;line-height:6.00px;font-size:6.00px;color:#4a4a4a;font-weight:normal;font-family:'Liberation Sans', sans-serif;top:538.92px;left:93.34px;"><span style="">$</span></div>
<div style="position:absolute;white-space:nowrap;line-height:6.00px;font-size:6.00px;color:#4a4a4a;font-weight:normal;font-family:'Liberation Sans', sans-serif;top:538.92px;right:856.95px;"><span style="">5,556</span></div>
<div style="position:absolute;white-space:nowrap;line-height:6.00px;font-size:6.00px;color:#4a4a4a;font-weight:normal;font-family:'Liberation Sans', sans-serif;top:538.92px;left:128.64px;"><span style="">$</span></div>
<div style="position:absolute;white-space:nowrap;line-height:6.00px;font-size:6.00px;color:#4a4a4a;font-weight:normal;font-family:'Liberation Sans', sans-serif;top:538.92px;right:820.54px;"><span style="">5,424</span></div>
<div style="position:absolute;white-space:nowrap;line-height:6.00px;font-size:6.00px;color:#4a4a4a;font-weight:normal;font-family:'Liberation Sans', sans-serif;top:538.92px;left:164.64px;"><span style="">$</span></div>
<div style="position:absolute;white-space:nowrap;line-height:6.00px;font-size:6.00px;color:#4a4a4a;font-weight:normal;font-family:'Liberation Sans', sans-serif;top:538.92px;right:785.24px;"><span style="">5,784</span></div>
<div style="position:absolute;white-space:nowrap;line-height:6.00px;font-size:6.00px;color:#4a4a4a;font-weight:normal;font-family:'Liberation Sans', sans-serif;top:538.92px;left:201.64px;"><span style="">$</span></div>
<div style="position:absolute;white-space:nowrap;line-height:6.00px;font-size:6.00px;color:#4a4a4a;font-weight:normal;font-family:'Liberation Sans', sans-serif;top:538.92px;right:749.05px;"><span style="">5,883</span></div>
<div style="position:absolute;white-space:nowrap;line-height:5.80px;font-size:5.80px;color:#4a4a4a;font-weight:normal;font-family:'Liberation Sans', sans-serif;top:546.35px;left:45.04px;"><span style="">Freelancers</span></div>
<div style="position:absolute;white-space:nowrap;line-height:6.00px;font-size:6.00px;color:#4a4a4a;font-weight:normal;font-family:'Liberation Sans', sans-serif;top:546.26px;left:93.34px;"><span style="">$</span></div>
<div style="position:absolute;white-space:nowrap;line-height:6.00px;font-size:6.00px;color:#4a4a4a;font-weight:normal;font-family:'Liberation Sans', sans-serif;top:546.26px;right:857.04px;"><span style="">5,604</span></div>
<div style="position:absolute;white-space:nowrap;line-height:6.00px;font-size:6.00px;color:#4a4a4a;font-weight:normal;font-family:'Liberation Sans', sans-serif;top:546.26px;left:128.64px;"><span style="">$</span></div>
<div style="position:absolute;white-space:nowrap;line-height:6.00px;font-size:6.00px;color:#4a4a4a;font-weight:normal;font-family:'Liberation Sans', sans-serif;top:546.26px;right:820.45px;"><span style="">5,556</span></div>
<div style="position:absolute;white-space:nowrap;line-height:6.00px;font-size:6.00px;color:#4a4a4a;font-weight:normal;font-family:'Liberation Sans', sans-serif;top:546.26px;left:164.64px;"><span style="">$</span></div>
<div style="position:absolute;white-space:nowrap;line-height:6.00px;font-size:6.00px;color:#4a4a4a;font-weight:normal;font-family:'Liberation Sans', sans-serif;top:546.26px;right:785.18px;"><span style="">5,700</span></div>
<div style="position:absolute;white-space:nowrap;line-height:6.00px;font-size:6.00px;color:#4a4a4a;font-weight:normal;font-family:'Liberation Sans', sans-serif;top:546.26px;left:201.64px;"><span style="">$</span></div>
<div style="position:absolute;white-space:nowrap;line-height:6.00px;font-size:6.00px;color:#4a4a4a;font-weight:normal;font-family:'Liberation Sans', sans-serif;top:546.26px;right:749.05px;"><span style="">5,438</span></div>
<div style="position:absolute;white-space:nowrap;line-height:5.80px;font-size:5.80px;color:#4a4a4a;font-weight:normal;font-family:'Liberation Sans', sans-serif;top:553.69px;left:45.38px;"><span style="">Travel</span></div>
<div style="position:absolute;white-space:nowrap;line-height:6.00px;font-size:6.00px;color:#4a4a4a;font-weight:normal;font-family:'Liberation Sans', sans-serif;top:553.60px;left:93.34px;"><span style="">$</span></div>
<div style="position:absolute;white-space:nowrap;line-height:6.00px;font-size:6.00px;color:#4a4a4a;font-weight:normal;font-family:'Liberation Sans', sans-serif;top:553.60px;right:856.95px;"><span style="">1,476</span></div>
<div style="position:absolute;white-space:nowrap;line-height:6.00px;font-size:6.00px;color:#4a4a4a;font-weight:normal;font-family:'Liberation Sans', sans-serif;top:553.60px;left:128.64px;"><span style="">$</span></div>
<div style="position:absolute;white-space:nowrap;line-height:6.00px;font-size:6.00px;color:#4a4a4a;font-weight:normal;font-family:'Liberation Sans', sans-serif;top:553.60px;right:820.54px;"><span style="">1,104</span></div>
<div style="position:absolute;white-space:nowrap;line-height:6.00px;font-size:6.00px;color:#4a4a4a;font-weight:normal;font-family:'Liberation Sans', sans-serif;top:553.60px;left:164.64px;"><span style="">$</span></div>
<div style="position:absolute;white-space:nowrap;line-height:6.00px;font-size:6.00px;color:#4a4a4a;font-weight:normal;font-family:'Liberation Sans', sans-serif;top:553.60px;right:785.15px;"><span style="">696</span></div>
<div style="position:absolute;white-space:nowrap;line-height:6.00px;font-size:6.00px;color:#4a4a4a;font-weight:normal;font-family:'Liberation Sans', sans-serif;top:553.60px;left:201.64px;"><span style="">$</span></div>
<div style="position:absolute;white-space:nowrap;line-height:6.00px;font-size:6.00px;color:#4a4a4a;font-weight:normal;font-family:'Liberation Sans', sans-serif;top:553.60px;right:749.05px;"><span style="">1,595</span></div>
</div></body></html>
